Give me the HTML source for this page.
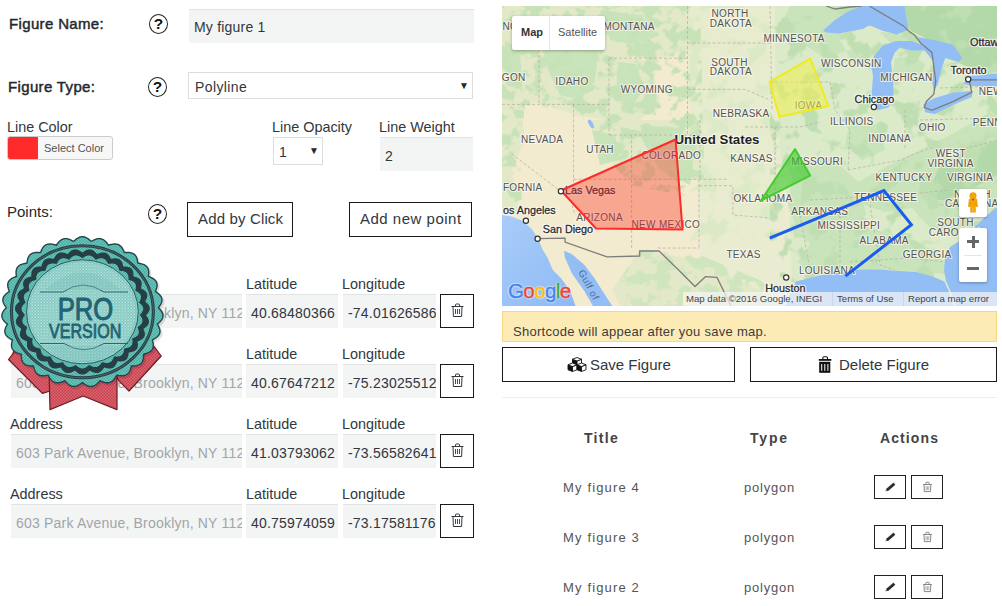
<!DOCTYPE html>
<html><head><meta charset="utf-8">
<style>
*{box-sizing:border-box;margin:0;padding:0}
html,body{width:1002px;height:606px;overflow:hidden;background:#fff;font-family:"Liberation Sans",sans-serif;color:#32373c}
.a{position:absolute;white-space:nowrap}
.lbl{font-size:14.4px;color:#32373c;line-height:1}
.b{font-weight:normal;font-size:15px;letter-spacing:0.35px;-webkit-text-stroke:0.45px #23282d;color:#23282d;line-height:1}
.q{position:absolute;width:19px;height:20px;border:1.3px solid #222;border-radius:50%;text-align:center;font-weight:bold;font-size:15.5px;line-height:18px;color:#111}
.inp{position:absolute;background:#f3f4f4;border-top:1px solid #e2e4e4;font-size:14px;color:#32373c;line-height:1}
.inp span{position:absolute;white-space:nowrap;letter-spacing:0.2px}
.btn{position:absolute;border:1.5px solid #1a1a1a;background:#fff;font-size:15px;color:#32373c;line-height:1}
.btn span{position:absolute;white-space:nowrap}
.tr{position:absolute;width:34px;height:34px;border:1.5px solid #1a1a1a;background:#fff}
</style></head><body>
<!-- LEFT PANEL -->
<div class="a b" style="left:9px;top:16px">Figure Name:</div>
<div class="q" style="left:149px;top:14px">?</div>
<div class="inp" style="left:189px;top:9px;width:285px;height:34px"><span style="left:5px;top:10px">My figure 1</span></div>

<div class="a b" style="left:8px;top:79px">Figure Type:</div>
<div class="q" style="left:148px;top:77px">?</div>
<div style="position:absolute;left:188px;top:72px;width:285px;height:27px;border:1px solid #ddd;background:#fff">
  <span class="a" style="left:6px;top:7px;font-size:14px;color:#32373c;line-height:1;letter-spacing:0.4px">Polyline</span>
  <span class="a" style="left:270px;top:8px;font-size:10px;color:#23282d;line-height:1">&#9660;</span>
</div>

<div class="a lbl" style="left:7px;top:120px">Line Color</div>
<div style="position:absolute;left:7px;top:136px;width:106px;height:24px;border:1px solid #ccc;border-radius:3px;background:#f7f7f7;overflow:hidden">
  <div style="position:absolute;left:0;top:0;width:30px;height:23px;background:#ff2a2a"></div>
  <span class="a" style="left:36px;top:6px;font-size:11px;color:#555;line-height:1">Select Color</span>
</div>

<div class="a lbl" style="left:272px;top:120px">Line Opacity</div>
<div style="position:absolute;left:273px;top:137px;width:50px;height:28px;border:1px solid #ddd;background:#fff">
  <span class="a" style="left:5px;top:7px;font-size:14px;line-height:1">1</span>
  <span class="a" style="left:35px;top:8px;font-size:10px;color:#23282d;line-height:1">&#9660;</span>
</div>
<div class="a lbl" style="left:379px;top:120px">Line Weight</div>
<div class="inp" style="left:380px;top:137px;width:93px;height:34px"><span style="left:5px;top:11px">2</span></div>

<div class="a" style="left:7px;top:204px;font-size:15px;color:#23282d;line-height:1">Points:</div>
<div class="q" style="left:148px;top:204px">?</div>
<div class="btn" style="left:187px;top:202px;width:106px;height:35px"><span style="left:10px;top:8px;letter-spacing:0.15px">Add by Click</span></div>
<div class="btn" style="left:349px;top:202px;width:123px;height:35px"><span style="left:10px;top:8px;letter-spacing:0.5px">Add new point</span></div>

<!-- rows -->
<div class="a lbl" style="left:10px;top:277px">Address</div>
<div class="inp" style="left:11px;top:294px;width:231px;height:34px;overflow:hidden"><span style="left:5px;top:11px;color:#a0a5aa">603 Park Avenue, Brooklyn, NY 11215</span></div>
<div class="a lbl" style="left:246px;top:277px">Latitude</div>
<div class="inp" style="left:246px;top:294px;width:92px;height:34px;overflow:hidden"><span style="left:5px;top:11px">40.68480366</span></div>
<div class="a lbl" style="left:342px;top:277px">Longitude</div>
<div class="inp" style="left:343px;top:294px;width:93px;height:34px;overflow:hidden"><span style="left:5px;top:11px">-74.01626586</span></div>
<div class="tr" style="left:440px;top:294px"><svg width="34" height="34" viewBox="0 0 34 34" style="position:absolute;left:-1.5px;top:-1.5px"><g fill="none" stroke="#32373c" stroke-width="1"><path d="M11.5 12.5h12M15.5 12.5v-1.5q0-1 1-1h2q1 0 1 1v1.5M13 12.5l0.4 10h8.2l0.4-10"/><path d="M15.5 15v5M17.5 15v5M19.5 15v5" stroke-width="0.9"/></g></svg></div>
<div class="a lbl" style="left:10px;top:347px">Address</div>
<div class="inp" style="left:11px;top:364px;width:231px;height:34px;overflow:hidden"><span style="left:5px;top:11px;color:#a0a5aa">603 Park Avenue, Brooklyn, NY 11215</span></div>
<div class="a lbl" style="left:246px;top:347px">Latitude</div>
<div class="inp" style="left:246px;top:364px;width:92px;height:34px;overflow:hidden"><span style="left:5px;top:11px">40.67647212</span></div>
<div class="a lbl" style="left:342px;top:347px">Longitude</div>
<div class="inp" style="left:343px;top:364px;width:93px;height:34px;overflow:hidden"><span style="left:5px;top:11px">-75.23025512</span></div>
<div class="tr" style="left:440px;top:364px"><svg width="34" height="34" viewBox="0 0 34 34" style="position:absolute;left:-1.5px;top:-1.5px"><g fill="none" stroke="#32373c" stroke-width="1"><path d="M11.5 12.5h12M15.5 12.5v-1.5q0-1 1-1h2q1 0 1 1v1.5M13 12.5l0.4 10h8.2l0.4-10"/><path d="M15.5 15v5M17.5 15v5M19.5 15v5" stroke-width="0.9"/></g></svg></div>
<div class="a lbl" style="left:10px;top:417px">Address</div>
<div class="inp" style="left:11px;top:434px;width:231px;height:34px;overflow:hidden"><span style="left:5px;top:11px;color:#a0a5aa">603 Park Avenue, Brooklyn, NY 11215</span></div>
<div class="a lbl" style="left:246px;top:417px">Latitude</div>
<div class="inp" style="left:246px;top:434px;width:92px;height:34px;overflow:hidden"><span style="left:5px;top:11px">41.03793062</span></div>
<div class="a lbl" style="left:342px;top:417px">Longitude</div>
<div class="inp" style="left:343px;top:434px;width:93px;height:34px;overflow:hidden"><span style="left:5px;top:11px">-73.56582641</span></div>
<div class="tr" style="left:440px;top:434px"><svg width="34" height="34" viewBox="0 0 34 34" style="position:absolute;left:-1.5px;top:-1.5px"><g fill="none" stroke="#32373c" stroke-width="1"><path d="M11.5 12.5h12M15.5 12.5v-1.5q0-1 1-1h2q1 0 1 1v1.5M13 12.5l0.4 10h8.2l0.4-10"/><path d="M15.5 15v5M17.5 15v5M19.5 15v5" stroke-width="0.9"/></g></svg></div>
<div class="a lbl" style="left:10px;top:487px">Address</div>
<div class="inp" style="left:11px;top:504px;width:231px;height:34px;overflow:hidden"><span style="left:5px;top:11px;color:#a0a5aa">603 Park Avenue, Brooklyn, NY 11215</span></div>
<div class="a lbl" style="left:246px;top:487px">Latitude</div>
<div class="inp" style="left:246px;top:504px;width:92px;height:34px;overflow:hidden"><span style="left:5px;top:11px">40.75974059</span></div>
<div class="a lbl" style="left:342px;top:487px">Longitude</div>
<div class="inp" style="left:343px;top:504px;width:93px;height:34px;overflow:hidden"><span style="left:5px;top:11px">-73.17581176</span></div>
<div class="tr" style="left:440px;top:504px"><svg width="34" height="34" viewBox="0 0 34 34" style="position:absolute;left:-1.5px;top:-1.5px"><g fill="none" stroke="#32373c" stroke-width="1"><path d="M11.5 12.5h12M15.5 12.5v-1.5q0-1 1-1h2q1 0 1 1v1.5M13 12.5l0.4 10h8.2l0.4-10"/><path d="M15.5 15v5M17.5 15v5M19.5 15v5" stroke-width="0.9"/></g></svg></div>


<svg width="170" height="190" viewBox="0 230 170 190" style="position:absolute;left:0;top:230px">
<defs>
<pattern id="ck1" width="3" height="3" patternUnits="userSpaceOnUse"><rect width="3" height="3" fill="#46ada2"/><rect width="1.5" height="1.5" fill="#72c6bc"/><rect x="1.5" y="1.5" width="1.5" height="1.5" fill="#72c6bc"/></pattern>
<pattern id="ck2" width="3" height="3" patternUnits="userSpaceOnUse"><rect width="3" height="3" fill="#82c8c0"/><rect width="1.5" height="1.5" fill="#9ed5ce"/><rect x="1.5" y="1.5" width="1.5" height="1.5" fill="#b6e2dd"/></pattern>
<pattern id="ck3" width="3" height="3" patternUnits="userSpaceOnUse"><rect width="3" height="3" fill="#c9414f"/><rect width="1.5" height="1.5" fill="#da6672"/><rect x="1.5" y="1.5" width="1.5" height="1.5" fill="#da6672"/></pattern>
</defs>
<polygon fill="url(#ck3)" stroke="#6e1c28" stroke-width="1.2" stroke-linejoin="round" points="8.5,359.5 16,350 50,376 50,391 42.4,393.4"/>
<polygon fill="url(#ck3)" stroke="#6e1c28" stroke-width="1.2" stroke-linejoin="round" points="154.4,346.8 161.2,356 129,391 118.8,380.7 116,376"/>
<polygon fill="url(#ck3)" stroke="#6e1c28" stroke-width="1.2" stroke-linejoin="round" points="49.2,376.5 117,376.5 117,409.6 83.1,396 50,409.6"/>
<path d="M82.40,235.77 L83.11,235.80 L83.82,235.89 L84.53,236.05 L85.24,236.27 L85.93,236.55 L86.62,236.88 L87.30,237.26 L87.97,237.68 L88.63,238.14 L89.28,238.64 L89.92,239.16 L90.55,239.71 L91.16,240.26 L91.85,240.18 L92.59,239.77 L93.34,239.38 L94.09,239.02 L94.85,238.68 L95.61,238.39 L96.36,238.13 L97.12,237.93 L97.87,237.77 L98.61,237.67 L99.35,237.63 L100.07,237.65 L100.78,237.73 L101.48,237.87 L102.16,238.08 L102.82,238.34 L103.47,238.67 L104.09,239.05 L104.69,239.48 L105.27,239.97 L105.83,240.50 L106.37,241.07 L106.90,241.67 L107.40,242.30 L107.88,242.95 L108.35,243.62 L108.81,244.30 L109.63,244.05 L110.45,243.82 L111.27,243.61 L112.10,243.43 L112.91,243.28 L113.72,243.17 L114.51,243.10 L115.29,243.07 L116.06,243.10 L116.80,243.18 L117.52,243.32 L118.21,243.51 L118.87,243.76 L119.50,244.07 L120.10,244.43 L120.67,244.85 L121.20,245.32 L121.70,245.84 L122.17,246.41 L122.61,247.02 L123.01,247.67 L123.39,248.35 L123.74,249.05 L124.06,249.78 L124.36,250.53 L124.65,251.28 L125.12,251.76 L125.98,251.70 L126.83,251.66 L127.68,251.64 L128.52,251.65 L129.35,251.69 L130.16,251.76 L130.94,251.88 L131.69,252.04 L132.42,252.25 L133.11,252.50 L133.76,252.80 L134.37,253.15 L134.94,253.56 L135.46,254.01 L135.94,254.50 L136.37,255.05 L136.76,255.64 L137.11,256.26 L137.41,256.93 L137.66,257.63 L137.89,258.35 L138.07,259.10 L138.22,259.87 L138.35,260.65 L138.46,261.44 L138.54,262.24 L139.13,262.59 L139.98,262.72 L140.82,262.87 L141.65,263.04 L142.46,263.23 L143.24,263.46 L144.00,263.72 L144.72,264.01 L145.40,264.34 L146.04,264.71 L146.63,265.12 L147.18,265.56 L147.67,266.05 L148.10,266.58 L148.48,267.14 L148.80,267.74 L149.07,268.37 L149.29,269.04 L149.45,269.73 L149.56,270.45 L149.62,271.19 L149.64,271.95 L149.62,272.72 L149.57,273.51 L149.49,274.30 L149.39,275.09 L149.27,275.88 L150.07,276.18 L150.86,276.50 L151.64,276.83 L152.39,277.18 L153.12,277.55 L153.82,277.95 L154.47,278.37 L155.09,278.82 L155.65,279.30 L156.17,279.80 L156.62,280.34 L157.02,280.90 L157.35,281.48 L157.63,282.10 L157.83,282.73 L157.98,283.39 L158.06,284.08 L158.09,284.77 L158.05,285.49 L157.96,286.22 L157.83,286.95 L157.64,287.70 L157.42,288.45 L157.17,289.20 L156.89,289.95 L156.59,290.70 L156.61,291.35 L157.31,291.82 L157.99,292.30 L158.66,292.79 L159.30,293.30 L159.90,293.82 L160.47,294.37 L160.99,294.92 L161.46,295.50 L161.87,296.09 L162.22,296.69 L162.51,297.31 L162.74,297.95 L162.89,298.60 L162.98,299.26 L163.01,299.92 L162.96,300.60 L162.85,301.28 L162.68,301.97 L162.45,302.66 L162.17,303.35 L161.84,304.03 L161.46,304.72 L161.05,305.40 L160.60,306.07 L160.14,306.74 L159.65,307.40 L159.87,308.02 L160.43,308.63 L160.97,309.25 L161.48,309.87 L161.97,310.51 L162.41,311.15 L162.81,311.80 L163.16,312.46 L163.46,313.12 L163.69,313.78 L163.86,314.45 L163.97,315.11 L164.01,315.78 L163.98,316.44 L163.88,317.10 L163.71,317.75 L163.48,318.40 L163.19,319.04 L162.83,319.66 L162.42,320.28 L161.96,320.89 L161.45,321.48 L160.90,322.06 L160.32,322.63 L159.71,323.19 L159.08,323.74 L158.45,324.27 L158.85,324.98 L159.24,325.69 L159.60,326.41 L159.94,327.13 L160.24,327.85 L160.50,328.57 L160.71,329.29 L160.87,330.00 L160.97,330.70 L161.02,331.40 L161.00,332.08 L160.92,332.74 L160.77,333.39 L160.55,334.03 L160.27,334.64 L159.92,335.23 L159.52,335.80 L159.05,336.35 L158.53,336.88 L157.96,337.38 L157.35,337.87 L156.69,338.33 L156.01,338.77 L155.29,339.20 L154.56,339.60 L153.81,340.00 L153.38,340.51 L153.59,341.28 L153.78,342.06 L153.95,342.84 L154.09,343.61 L154.19,344.37 L154.25,345.12 L154.26,345.86 L154.23,346.58 L154.13,347.28 L153.99,347.96 L153.78,348.61 L153.51,349.23 L153.18,349.82 L152.80,350.37 L152.35,350.90 L151.85,351.39 L151.30,351.85 L150.69,352.27 L150.04,352.66 L149.35,353.02 L148.62,353.35 L147.86,353.65 L147.07,353.92 L146.26,354.18 L145.44,354.41 L144.62,354.63 L144.35,355.23 L144.36,356.03 L144.35,356.82 L144.31,357.61 L144.24,358.39 L144.14,359.15 L144.00,359.88 L143.82,360.59 L143.58,361.28 L143.31,361.93 L142.98,362.54 L142.60,363.11 L142.17,363.65 L141.69,364.14 L141.16,364.58 L140.58,364.98 L139.95,365.34 L139.29,365.65 L138.58,365.92 L137.84,366.14 L137.06,366.33 L136.26,366.48 L135.44,366.60 L134.60,366.69 L133.75,366.75 L132.90,366.80 L132.04,366.83 L131.86,367.61 L131.66,368.39 L131.44,369.15 L131.20,369.91 L130.94,370.64 L130.64,371.35 L130.30,372.02 L129.94,372.66 L129.53,373.26 L129.08,373.82 L128.60,374.33 L128.07,374.79 L127.51,375.20 L126.91,375.56 L126.27,375.86 L125.60,376.11 L124.89,376.30 L124.15,376.44 L123.39,376.54 L122.61,376.58 L121.80,376.58 L120.98,376.55 L120.15,376.47 L119.31,376.37 L118.46,376.24 L117.62,376.10 L116.93,376.23 L116.56,376.95 L116.17,377.66 L115.76,378.36 L115.34,379.03 L114.89,379.68 L114.41,380.29 L113.91,380.86 L113.39,381.39 L112.83,381.87 L112.25,382.30 L111.65,382.67 L111.01,382.99 L110.36,383.25 L109.67,383.44 L108.97,383.58 L108.25,383.66 L107.51,383.68 L106.75,383.64 L105.98,383.55 L105.20,383.41 L104.42,383.22 L103.63,383.00 L102.83,382.74 L102.04,382.45 L101.25,382.14 L100.47,381.81 L99.85,382.11 L99.30,382.73 L98.75,383.33 L98.17,383.91 L97.58,384.47 L96.98,384.99 L96.36,385.47 L95.73,385.90 L95.08,386.29 L94.42,386.62 L93.74,386.89 L93.06,387.10 L92.36,387.25 L91.65,387.34 L90.94,387.37 L90.22,387.33 L89.49,387.23 L88.77,387.06 L88.04,386.85 L87.32,386.58 L86.59,386.26 L85.88,385.90 L85.17,385.49 L84.46,385.06 L83.77,384.60 L83.08,384.12 L82.40,383.63 L81.72,384.12 L81.03,384.60 L80.34,385.06 L79.63,385.49 L78.92,385.90 L78.21,386.26 L77.48,386.58 L76.76,386.85 L76.03,387.06 L75.31,387.23 L74.58,387.33 L73.86,387.37 L73.15,387.34 L72.44,387.25 L71.74,387.10 L71.06,386.89 L70.38,386.62 L69.72,386.29 L69.07,385.90 L68.44,385.47 L67.82,384.99 L67.22,384.47 L66.63,383.91 L66.05,383.33 L65.50,382.73 L64.95,382.11 L64.33,381.81 L63.55,382.14 L62.76,382.45 L61.97,382.74 L61.17,383.00 L60.38,383.22 L59.60,383.41 L58.82,383.55 L58.05,383.64 L57.29,383.68 L56.55,383.66 L55.83,383.58 L55.13,383.44 L54.44,383.25 L53.79,382.99 L53.15,382.67 L52.55,382.30 L51.97,381.87 L51.41,381.39 L50.89,380.86 L50.39,380.29 L49.91,379.68 L49.46,379.03 L49.04,378.36 L48.63,377.66 L48.24,376.95 L47.87,376.23 L47.18,376.10 L46.34,376.24 L45.49,376.37 L44.65,376.47 L43.82,376.55 L43.00,376.58 L42.19,376.58 L41.41,376.54 L40.65,376.44 L39.91,376.30 L39.20,376.11 L38.53,375.86 L37.89,375.56 L37.29,375.20 L36.73,374.79 L36.20,374.33 L35.72,373.82 L35.27,373.26 L34.86,372.66 L34.50,372.02 L34.16,371.35 L33.86,370.64 L33.60,369.91 L33.36,369.15 L33.14,368.39 L32.94,367.61 L32.76,366.83 L31.90,366.80 L31.05,366.75 L30.20,366.69 L29.36,366.60 L28.54,366.48 L27.74,366.33 L26.96,366.14 L26.22,365.92 L25.51,365.65 L24.85,365.34 L24.22,364.98 L23.64,364.58 L23.11,364.14 L22.63,363.65 L22.20,363.11 L21.82,362.54 L21.49,361.93 L21.22,361.28 L20.98,360.59 L20.80,359.88 L20.66,359.15 L20.56,358.39 L20.49,357.61 L20.45,356.82 L20.44,356.03 L20.45,355.23 L20.18,354.63 L19.36,354.41 L18.54,354.18 L17.73,353.92 L16.94,353.65 L16.18,353.35 L15.45,353.02 L14.76,352.66 L14.11,352.27 L13.50,351.85 L12.95,351.39 L12.45,350.90 L12.00,350.37 L11.62,349.82 L11.29,349.23 L11.02,348.61 L10.81,347.96 L10.67,347.28 L10.57,346.58 L10.54,345.86 L10.55,345.12 L10.61,344.37 L10.71,343.61 L10.85,342.84 L11.02,342.06 L11.21,341.28 L11.42,340.51 L10.99,340.00 L10.24,339.60 L9.51,339.20 L8.79,338.77 L8.11,338.33 L7.45,337.87 L6.84,337.38 L6.27,336.88 L5.75,336.35 L5.28,335.80 L4.88,335.23 L4.53,334.64 L4.25,334.03 L4.03,333.39 L3.88,332.74 L3.80,332.08 L3.78,331.40 L3.83,330.70 L3.93,330.00 L4.09,329.29 L4.30,328.57 L4.56,327.85 L4.86,327.13 L5.20,326.41 L5.56,325.69 L5.95,324.98 L6.35,324.27 L5.72,323.74 L5.09,323.19 L4.48,322.63 L3.90,322.06 L3.35,321.48 L2.84,320.89 L2.38,320.28 L1.97,319.66 L1.61,319.04 L1.32,318.40 L1.09,317.75 L0.92,317.10 L0.82,316.44 L0.79,315.78 L0.83,315.11 L0.94,314.45 L1.11,313.78 L1.34,313.12 L1.64,312.46 L1.99,311.80 L2.39,311.15 L2.83,310.51 L3.32,309.87 L3.83,309.25 L4.37,308.63 L4.93,308.02 L5.15,307.40 L4.66,306.74 L4.20,306.07 L3.75,305.40 L3.34,304.72 L2.96,304.03 L2.63,303.35 L2.35,302.66 L2.12,301.97 L1.95,301.28 L1.84,300.60 L1.79,299.92 L1.82,299.26 L1.91,298.60 L2.06,297.95 L2.29,297.31 L2.58,296.69 L2.93,296.09 L3.34,295.50 L3.81,294.92 L4.33,294.37 L4.90,293.82 L5.50,293.30 L6.14,292.79 L6.81,292.30 L7.49,291.82 L8.19,291.35 L8.21,290.70 L7.91,289.95 L7.63,289.20 L7.38,288.45 L7.16,287.70 L6.97,286.95 L6.84,286.22 L6.75,285.49 L6.71,284.77 L6.74,284.08 L6.82,283.39 L6.97,282.73 L7.17,282.10 L7.45,281.48 L7.78,280.90 L8.18,280.34 L8.63,279.80 L9.15,279.30 L9.71,278.82 L10.33,278.37 L10.98,277.95 L11.68,277.55 L12.41,277.18 L13.16,276.83 L13.94,276.50 L14.73,276.18 L15.53,275.88 L15.41,275.09 L15.31,274.30 L15.23,273.51 L15.18,272.72 L15.16,271.95 L15.18,271.19 L15.24,270.45 L15.35,269.73 L15.51,269.04 L15.73,268.37 L16.00,267.74 L16.32,267.14 L16.70,266.58 L17.13,266.05 L17.62,265.56 L18.17,265.12 L18.76,264.71 L19.40,264.34 L20.08,264.01 L20.80,263.72 L21.56,263.46 L22.34,263.23 L23.15,263.04 L23.98,262.87 L24.82,262.72 L25.67,262.59 L26.26,262.24 L26.34,261.44 L26.45,260.65 L26.58,259.87 L26.73,259.10 L26.91,258.35 L27.14,257.63 L27.39,256.93 L27.69,256.26 L28.04,255.64 L28.43,255.05 L28.86,254.50 L29.34,254.01 L29.86,253.56 L30.43,253.15 L31.04,252.80 L31.69,252.50 L32.38,252.25 L33.11,252.04 L33.86,251.88 L34.64,251.76 L35.45,251.69 L36.28,251.65 L37.12,251.64 L37.97,251.66 L38.82,251.70 L39.68,251.76 L40.15,251.28 L40.44,250.53 L40.74,249.78 L41.06,249.05 L41.41,248.35 L41.79,247.67 L42.19,247.02 L42.63,246.41 L43.10,245.84 L43.60,245.32 L44.13,244.85 L44.70,244.43 L45.30,244.07 L45.93,243.76 L46.59,243.51 L47.28,243.32 L48.00,243.18 L48.74,243.10 L49.51,243.07 L50.29,243.10 L51.08,243.17 L51.89,243.28 L52.70,243.43 L53.53,243.61 L54.35,243.82 L55.17,244.05 L55.99,244.30 L56.45,243.62 L56.92,242.95 L57.40,242.30 L57.90,241.67 L58.43,241.07 L58.97,240.50 L59.53,239.97 L60.11,239.48 L60.71,239.05 L61.33,238.67 L61.98,238.34 L62.64,238.08 L63.32,237.87 L64.02,237.73 L64.73,237.65 L65.45,237.63 L66.19,237.67 L66.93,237.77 L67.68,237.93 L68.44,238.13 L69.19,238.39 L69.95,238.68 L70.71,239.02 L71.46,239.38 L72.21,239.77 L72.95,240.18 L73.64,240.26 L74.25,239.71 L74.88,239.16 L75.52,238.64 L76.17,238.14 L76.83,237.68 L77.50,237.26 L78.18,236.88 L78.87,236.55 L79.56,236.27 L80.27,236.05 L80.98,235.89 L81.69,235.80Z" fill="rgba(0,0,0,0.12)" transform="translate(1.5,2)"/>
<path d="M82.40,236.77 L83.10,236.80 L83.81,236.89 L84.50,237.05 L85.20,237.27 L85.89,237.55 L86.56,237.87 L87.24,238.25 L87.90,238.68 L88.55,239.14 L89.19,239.64 L89.82,240.16 L90.43,240.70 L91.04,241.26 L91.72,241.17 L92.45,240.76 L93.19,240.37 L93.93,240.01 L94.68,239.67 L95.43,239.37 L96.18,239.12 L96.92,238.91 L97.66,238.75 L98.40,238.65 L99.12,238.61 L99.84,238.62 L100.54,238.70 L101.23,238.84 L101.90,239.05 L102.55,239.31 L103.19,239.63 L103.80,240.01 L104.40,240.44 L104.97,240.93 L105.52,241.45 L106.05,242.02 L106.56,242.62 L107.06,243.25 L107.53,243.90 L108.00,244.56 L108.44,245.24 L109.25,244.99 L110.07,244.76 L110.88,244.54 L111.69,244.36 L112.50,244.20 L113.30,244.09 L114.08,244.01 L114.86,243.99 L115.61,244.01 L116.34,244.09 L117.05,244.22 L117.73,244.41 L118.39,244.65 L119.01,244.96 L119.60,245.32 L120.16,245.73 L120.69,246.20 L121.18,246.72 L121.64,247.28 L122.07,247.88 L122.47,248.53 L122.83,249.20 L123.17,249.91 L123.49,250.63 L123.79,251.37 L124.06,252.12 L124.53,252.60 L125.37,252.53 L126.22,252.49 L127.07,252.46 L127.90,252.46 L128.72,252.50 L129.52,252.57 L130.29,252.68 L131.04,252.83 L131.76,253.03 L132.44,253.28 L133.08,253.58 L133.69,253.93 L134.25,254.32 L134.76,254.77 L135.24,255.26 L135.66,255.80 L136.04,256.38 L136.38,257.00 L136.67,257.66 L136.92,258.35 L137.14,259.07 L137.32,259.81 L137.46,260.58 L137.58,261.35 L137.68,262.14 L137.76,262.93 L138.35,263.27 L139.19,263.39 L140.02,263.54 L140.85,263.70 L141.65,263.89 L142.43,264.11 L143.18,264.36 L143.89,264.65 L144.57,264.97 L145.20,265.33 L145.79,265.73 L146.32,266.17 L146.81,266.65 L147.24,267.17 L147.61,267.73 L147.93,268.32 L148.19,268.95 L148.40,269.60 L148.56,270.29 L148.66,271.00 L148.72,271.74 L148.74,272.49 L148.71,273.25 L148.66,274.03 L148.57,274.81 L148.47,275.60 L148.34,276.38 L149.14,276.68 L149.92,276.98 L150.69,277.31 L151.44,277.65 L152.17,278.02 L152.86,278.40 L153.51,278.82 L154.12,279.26 L154.68,279.73 L155.19,280.22 L155.64,280.75 L156.04,281.30 L156.37,281.88 L156.64,282.49 L156.84,283.12 L156.98,283.77 L157.06,284.44 L157.08,285.13 L157.04,285.84 L156.95,286.56 L156.81,287.29 L156.63,288.02 L156.40,288.77 L156.15,289.51 L155.86,290.25 L155.56,290.99 L155.58,291.64 L156.27,292.09 L156.96,292.57 L157.62,293.05 L158.26,293.55 L158.86,294.07 L159.42,294.60 L159.94,295.15 L160.41,295.71 L160.82,296.29 L161.17,296.89 L161.46,297.51 L161.68,298.13 L161.84,298.77 L161.92,299.42 L161.94,300.08 L161.90,300.75 L161.79,301.42 L161.62,302.10 L161.39,302.78 L161.10,303.46 L160.77,304.14 L160.39,304.81 L159.98,305.49 L159.53,306.15 L159.06,306.81 L158.58,307.47 L158.79,308.08 L159.35,308.67 L159.89,309.28 L160.41,309.90 L160.89,310.53 L161.34,311.16 L161.74,311.80 L162.09,312.45 L162.38,313.10 L162.62,313.75 L162.79,314.41 L162.90,315.07 L162.94,315.73 L162.91,316.38 L162.81,317.03 L162.64,317.67 L162.41,318.31 L162.12,318.94 L161.76,319.56 L161.35,320.17 L160.89,320.76 L160.38,321.35 L159.83,321.92 L159.25,322.48 L158.65,323.03 L158.02,323.57 L157.39,324.10 L157.79,324.80 L158.18,325.50 L158.55,326.21 L158.89,326.92 L159.19,327.64 L159.45,328.35 L159.67,329.06 L159.83,329.76 L159.93,330.45 L159.98,331.14 L159.96,331.81 L159.88,332.47 L159.74,333.11 L159.52,333.73 L159.24,334.34 L158.90,334.92 L158.50,335.49 L158.04,336.03 L157.52,336.55 L156.95,337.04 L156.34,337.52 L155.69,337.97 L155.01,338.40 L154.29,338.82 L153.56,339.22 L152.82,339.61 L152.39,340.11 L152.61,340.88 L152.80,341.65 L152.98,342.41 L153.12,343.18 L153.22,343.93 L153.29,344.68 L153.31,345.41 L153.27,346.12 L153.18,346.81 L153.04,347.48 L152.84,348.12 L152.58,348.73 L152.25,349.32 L151.87,349.87 L151.43,350.39 L150.94,350.87 L150.39,351.32 L149.79,351.73 L149.14,352.12 L148.45,352.47 L147.73,352.79 L146.97,353.08 L146.19,353.35 L145.39,353.59 L144.57,353.82 L143.75,354.03 L143.50,354.63 L143.51,355.42 L143.50,356.21 L143.47,356.99 L143.41,357.76 L143.31,358.51 L143.18,359.24 L143.00,359.94 L142.77,360.62 L142.50,361.26 L142.18,361.87 L141.81,362.44 L141.38,362.96 L140.91,363.45 L140.38,363.89 L139.81,364.28 L139.19,364.63 L138.53,364.94 L137.83,365.20 L137.10,365.42 L136.33,365.60 L135.54,365.74 L134.72,365.86 L133.89,365.94 L133.05,366.00 L132.20,366.04 L131.35,366.06 L131.17,366.84 L130.98,367.61 L130.77,368.37 L130.54,369.12 L130.28,369.85 L129.99,370.55 L129.67,371.22 L129.30,371.85 L128.91,372.45 L128.47,373.00 L127.99,373.51 L127.47,373.96 L126.92,374.37 L126.32,374.72 L125.69,375.01 L125.03,375.26 L124.33,375.45 L123.60,375.59 L122.85,375.67 L122.07,375.72 L121.27,375.71 L120.46,375.67 L119.64,375.59 L118.80,375.49 L117.97,375.36 L117.13,375.21 L116.46,375.34 L116.09,376.05 L115.71,376.76 L115.31,377.45 L114.89,378.12 L114.45,378.76 L113.99,379.37 L113.49,379.94 L112.98,380.47 L112.43,380.94 L111.86,381.37 L111.26,381.74 L110.64,382.05 L109.99,382.31 L109.31,382.50 L108.62,382.64 L107.91,382.71 L107.17,382.73 L106.43,382.69 L105.67,382.59 L104.90,382.45 L104.12,382.26 L103.34,382.03 L102.56,381.77 L101.77,381.48 L100.99,381.17 L100.22,380.84 L99.61,381.14 L99.07,381.75 L98.52,382.35 L97.96,382.93 L97.38,383.49 L96.79,384.00 L96.18,384.48 L95.55,384.91 L94.91,385.30 L94.26,385.63 L93.60,385.90 L92.92,386.11 L92.23,386.26 L91.53,386.35 L90.83,386.37 L90.11,386.33 L89.40,386.23 L88.68,386.07 L87.97,385.85 L87.25,385.58 L86.54,385.26 L85.83,384.90 L85.13,384.50 L84.43,384.06 L83.75,383.60 L83.07,383.12 L82.40,382.63 L81.73,383.12 L81.05,383.60 L80.37,384.06 L79.67,384.50 L78.97,384.90 L78.26,385.26 L77.55,385.58 L76.83,385.85 L76.12,386.07 L75.40,386.23 L74.69,386.33 L73.97,386.37 L73.27,386.35 L72.57,386.26 L71.88,386.11 L71.20,385.90 L70.54,385.63 L69.89,385.30 L69.25,384.91 L68.62,384.48 L68.01,384.00 L67.42,383.49 L66.84,382.93 L66.28,382.35 L65.73,381.75 L65.19,381.14 L64.58,380.84 L63.81,381.17 L63.03,381.48 L62.24,381.77 L61.46,382.03 L60.68,382.26 L59.90,382.45 L59.13,382.59 L58.37,382.69 L57.63,382.73 L56.89,382.71 L56.18,382.64 L55.49,382.50 L54.81,382.31 L54.16,382.05 L53.54,381.74 L52.94,381.37 L52.37,380.94 L51.82,380.47 L51.31,379.94 L50.81,379.37 L50.35,378.76 L49.91,378.12 L49.49,377.45 L49.09,376.76 L48.71,376.05 L48.34,375.34 L47.67,375.21 L46.83,375.36 L46.00,375.49 L45.16,375.59 L44.34,375.67 L43.53,375.71 L42.73,375.72 L41.95,375.67 L41.20,375.59 L40.47,375.45 L39.77,375.26 L39.11,375.01 L38.48,374.72 L37.88,374.37 L37.33,373.96 L36.81,373.51 L36.33,373.00 L35.89,372.45 L35.50,371.85 L35.13,371.22 L34.81,370.55 L34.52,369.85 L34.26,369.12 L34.03,368.37 L33.82,367.61 L33.63,366.84 L33.45,366.06 L32.60,366.04 L31.75,366.00 L30.91,365.94 L30.08,365.86 L29.26,365.74 L28.47,365.60 L27.70,365.42 L26.97,365.20 L26.27,364.94 L25.61,364.63 L24.99,364.28 L24.42,363.89 L23.89,363.45 L23.42,362.96 L22.99,362.44 L22.62,361.87 L22.30,361.26 L22.03,360.62 L21.80,359.94 L21.62,359.24 L21.49,358.51 L21.39,357.76 L21.33,356.99 L21.30,356.21 L21.29,355.42 L21.30,354.63 L21.05,354.03 L20.23,353.82 L19.41,353.59 L18.61,353.35 L17.83,353.08 L17.07,352.79 L16.35,352.47 L15.66,352.12 L15.01,351.73 L14.41,351.32 L13.86,350.87 L13.37,350.39 L12.93,349.87 L12.55,349.32 L12.22,348.73 L11.96,348.12 L11.76,347.48 L11.62,346.81 L11.53,346.12 L11.49,345.41 L11.51,344.68 L11.58,343.93 L11.68,343.18 L11.82,342.41 L12.00,341.65 L12.19,340.88 L12.41,340.11 L11.98,339.61 L11.24,339.22 L10.51,338.82 L9.79,338.40 L9.11,337.97 L8.46,337.52 L7.85,337.04 L7.28,336.55 L6.76,336.03 L6.30,335.49 L5.90,334.92 L5.56,334.34 L5.28,333.73 L5.06,333.11 L4.92,332.47 L4.84,331.81 L4.82,331.14 L4.87,330.45 L4.97,329.76 L5.13,329.06 L5.35,328.35 L5.61,327.64 L5.91,326.92 L6.25,326.21 L6.62,325.50 L7.01,324.80 L7.41,324.10 L6.78,323.57 L6.15,323.03 L5.55,322.48 L4.97,321.92 L4.42,321.35 L3.91,320.76 L3.45,320.17 L3.04,319.56 L2.68,318.94 L2.39,318.31 L2.16,317.67 L1.99,317.03 L1.89,316.38 L1.86,315.73 L1.90,315.07 L2.01,314.41 L2.18,313.75 L2.42,313.10 L2.71,312.45 L3.06,311.80 L3.46,311.16 L3.91,310.53 L4.39,309.90 L4.91,309.28 L5.45,308.67 L6.01,308.08 L6.22,307.47 L5.74,306.81 L5.27,306.15 L4.82,305.49 L4.41,304.81 L4.03,304.14 L3.70,303.46 L3.41,302.78 L3.18,302.10 L3.01,301.42 L2.90,300.75 L2.86,300.08 L2.88,299.42 L2.96,298.77 L3.12,298.13 L3.34,297.51 L3.63,296.89 L3.98,296.29 L4.39,295.71 L4.86,295.15 L5.38,294.60 L5.94,294.07 L6.54,293.55 L7.18,293.05 L7.84,292.57 L8.53,292.09 L9.22,291.64 L9.24,290.99 L8.94,290.25 L8.65,289.51 L8.40,288.77 L8.17,288.02 L7.99,287.29 L7.85,286.56 L7.76,285.84 L7.72,285.13 L7.74,284.44 L7.82,283.77 L7.96,283.12 L8.16,282.49 L8.43,281.88 L8.76,281.30 L9.16,280.75 L9.61,280.22 L10.12,279.73 L10.68,279.26 L11.29,278.82 L11.94,278.40 L12.63,278.02 L13.36,277.65 L14.11,277.31 L14.88,276.98 L15.66,276.68 L16.46,276.38 L16.33,275.60 L16.23,274.81 L16.14,274.03 L16.09,273.25 L16.06,272.49 L16.08,271.74 L16.14,271.00 L16.24,270.29 L16.40,269.60 L16.61,268.95 L16.87,268.32 L17.19,267.73 L17.56,267.17 L17.99,266.65 L18.48,266.17 L19.01,265.73 L19.60,265.33 L20.23,264.97 L20.91,264.65 L21.62,264.36 L22.37,264.11 L23.15,263.89 L23.95,263.70 L24.78,263.54 L25.61,263.39 L26.45,263.27 L27.04,262.93 L27.12,262.14 L27.22,261.35 L27.34,260.58 L27.48,259.81 L27.66,259.07 L27.88,258.35 L28.13,257.66 L28.42,257.00 L28.76,256.38 L29.14,255.80 L29.56,255.26 L30.04,254.77 L30.55,254.32 L31.11,253.93 L31.72,253.58 L32.36,253.28 L33.04,253.03 L33.76,252.83 L34.51,252.68 L35.28,252.57 L36.08,252.50 L36.90,252.46 L37.73,252.46 L38.58,252.49 L39.43,252.53 L40.27,252.60 L40.74,252.12 L41.01,251.37 L41.31,250.63 L41.63,249.91 L41.97,249.20 L42.33,248.53 L42.73,247.88 L43.16,247.28 L43.62,246.72 L44.11,246.20 L44.64,245.73 L45.20,245.32 L45.79,244.96 L46.41,244.65 L47.07,244.41 L47.75,244.22 L48.46,244.09 L49.19,244.01 L49.94,243.99 L50.72,244.01 L51.50,244.09 L52.30,244.20 L53.11,244.36 L53.92,244.54 L54.73,244.76 L55.55,244.99 L56.36,245.24 L56.80,244.56 L57.27,243.90 L57.74,243.25 L58.24,242.62 L58.75,242.02 L59.28,241.45 L59.83,240.93 L60.40,240.44 L61.00,240.01 L61.61,239.63 L62.25,239.31 L62.90,239.05 L63.57,238.84 L64.26,238.70 L64.96,238.62 L65.68,238.61 L66.40,238.65 L67.14,238.75 L67.88,238.91 L68.62,239.12 L69.37,239.37 L70.12,239.67 L70.87,240.01 L71.61,240.37 L72.35,240.76 L73.08,241.17 L73.76,241.26 L74.37,240.70 L74.98,240.16 L75.61,239.64 L76.25,239.14 L76.90,238.68 L77.56,238.25 L78.24,237.87 L78.91,237.55 L79.60,237.27 L80.30,237.05 L80.99,236.89 L81.70,236.80Z" fill="url(#ck1)" stroke="#24464b" stroke-width="1.4"/>
<ellipse cx="82.4" cy="311.8" rx="70.95" ry="66.00" fill="none" stroke="#263f44" stroke-width="3"/>
<ellipse cx="82.4" cy="311.8" rx="70.95" ry="66.00" fill="none" stroke="#6f8d8f" stroke-width="0.5"/>
<path d="M82.40,252.59 L82.96,252.17 L83.53,251.75 L84.10,251.36 L84.68,250.99 L85.27,250.64 L85.86,250.33 L86.46,250.06 L87.06,249.82 L87.66,249.64 L88.26,249.50 L88.86,249.41 L89.45,249.37 L90.04,249.39 L90.63,249.47 L91.20,249.59 L91.77,249.77 L92.33,250.00 L92.87,250.28 L93.41,250.61 L93.93,250.98 L94.44,251.39 L94.93,251.83 L95.41,252.30 L95.88,252.79 L96.34,253.30 L96.79,253.83 L97.30,254.08 L97.95,253.80 L98.60,253.53 L99.26,253.27 L99.92,253.04 L100.57,252.85 L101.23,252.68 L101.87,252.56 L102.51,252.47 L103.14,252.43 L103.75,252.44 L104.35,252.50 L104.93,252.61 L105.49,252.77 L106.04,252.99 L106.56,253.25 L107.06,253.56 L107.54,253.92 L107.99,254.33 L108.42,254.77 L108.83,255.26 L109.22,255.77 L109.58,256.32 L109.93,256.89 L110.26,257.47 L110.57,258.07 L110.87,258.68 L111.44,258.79 L112.14,258.65 L112.85,258.53 L113.55,258.44 L114.24,258.37 L114.93,258.32 L115.60,258.31 L116.25,258.34 L116.88,258.41 L117.50,258.52 L118.08,258.68 L118.64,258.88 L119.17,259.13 L119.67,259.42 L120.13,259.76 L120.56,260.14 L120.96,260.57 L121.33,261.04 L121.66,261.54 L121.95,262.08 L122.22,262.64 L122.46,263.24 L122.67,263.85 L122.86,264.48 L123.03,265.13 L123.18,265.78 L123.32,266.44 L124.04,266.45 L124.75,266.48 L125.47,266.52 L126.17,266.58 L126.86,266.67 L127.53,266.78 L128.17,266.93 L128.79,267.11 L129.38,267.33 L129.94,267.58 L130.46,267.87 L130.94,268.20 L131.38,268.56 L131.78,268.97 L132.13,269.41 L132.44,269.89 L132.71,270.40 L132.93,270.94 L133.11,271.51 L133.26,272.10 L133.37,272.72 L133.44,273.35 L133.48,274.00 L133.50,274.66 L133.50,275.33 L133.48,275.99 L133.69,276.49 L134.39,276.66 L135.08,276.85 L135.76,277.05 L136.42,277.26 L137.06,277.50 L137.67,277.77 L138.25,278.06 L138.80,278.38 L139.31,278.72 L139.77,279.10 L140.19,279.50 L140.56,279.93 L140.88,280.39 L141.15,280.88 L141.37,281.40 L141.53,281.93 L141.65,282.49 L141.72,283.08 L141.74,283.67 L141.72,284.29 L141.66,284.91 L141.56,285.55 L141.43,286.19 L141.28,286.84 L141.10,287.49 L140.91,288.13 L141.27,288.55 L141.91,288.87 L142.53,289.20 L143.13,289.55 L143.71,289.91 L144.27,290.28 L144.79,290.68 L145.27,291.09 L145.71,291.52 L146.10,291.97 L146.44,292.44 L146.73,292.93 L146.96,293.44 L147.14,293.96 L147.26,294.50 L147.33,295.05 L147.34,295.61 L147.30,296.19 L147.20,296.77 L147.06,297.36 L146.87,297.95 L146.65,298.55 L146.38,299.15 L146.09,299.75 L145.77,300.34 L145.44,300.93 L145.09,301.52 L145.63,301.96 L146.16,302.41 L146.68,302.86 L147.18,303.33 L147.64,303.81 L148.08,304.30 L148.47,304.80 L148.82,305.31 L149.12,305.82 L149.37,306.35 L149.57,306.88 L149.71,307.42 L149.80,307.97 L149.82,308.51 L149.79,309.06 L149.69,309.61 L149.55,310.16 L149.34,310.71 L149.09,311.26 L148.79,311.80 L148.45,312.34 L148.07,312.87 L147.65,313.39 L147.21,313.91 L146.75,314.41 L146.27,314.91 L146.09,315.42 L146.50,315.97 L146.91,316.52 L147.29,317.08 L147.64,317.64 L147.97,318.21 L148.26,318.78 L148.50,319.35 L148.70,319.92 L148.85,320.49 L148.95,321.05 L148.99,321.61 L148.97,322.16 L148.90,322.71 L148.77,323.24 L148.58,323.77 L148.34,324.28 L148.04,324.78 L147.69,325.26 L147.29,325.74 L146.85,326.19 L146.37,326.64 L145.86,327.07 L145.32,327.48 L144.75,327.89 L144.17,328.28 L143.58,328.66 L143.56,329.20 L143.83,329.82 L144.08,330.44 L144.30,331.07 L144.50,331.69 L144.66,332.31 L144.79,332.92 L144.87,333.53 L144.91,334.12 L144.90,334.70 L144.83,335.26 L144.72,335.81 L144.55,336.34 L144.32,336.85 L144.04,337.33 L143.71,337.79 L143.33,338.23 L142.90,338.64 L142.43,339.03 L141.91,339.40 L141.36,339.74 L140.77,340.07 L140.16,340.37 L139.52,340.65 L138.86,340.91 L138.20,341.17 L137.53,341.41 L137.64,342.07 L137.74,342.73 L137.82,343.39 L137.87,344.04 L137.90,344.69 L137.89,345.32 L137.85,345.94 L137.77,346.54 L137.64,347.12 L137.47,347.67 L137.25,348.20 L136.99,348.70 L136.68,349.16 L136.32,349.60 L135.91,350.00 L135.46,350.36 L134.97,350.70 L134.43,351.00 L133.86,351.26 L133.26,351.50 L132.63,351.70 L131.97,351.88 L131.29,352.04 L130.59,352.17 L129.89,352.28 L129.18,352.38 L128.68,352.66 L128.63,353.32 L128.55,353.99 L128.46,354.64 L128.34,355.29 L128.20,355.92 L128.03,356.52 L127.82,357.11 L127.58,357.66 L127.30,358.19 L126.98,358.68 L126.63,359.13 L126.24,359.55 L125.80,359.92 L125.33,360.25 L124.83,360.54 L124.29,360.78 L123.71,360.99 L123.11,361.15 L122.48,361.28 L121.83,361.36 L121.15,361.42 L120.46,361.44 L119.76,361.43 L119.05,361.41 L118.33,361.36 L117.62,361.30 L117.23,361.70 L117.01,362.33 L116.77,362.96 L116.51,363.57 L116.23,364.17 L115.92,364.74 L115.60,365.29 L115.24,365.80 L114.86,366.27 L114.45,366.71 L114.01,367.11 L113.55,367.46 L113.05,367.76 L112.53,368.01 L111.98,368.22 L111.41,368.37 L110.81,368.48 L110.20,368.54 L109.56,368.56 L108.92,368.53 L108.25,368.46 L107.58,368.35 L106.90,368.22 L106.22,368.05 L105.54,367.87 L104.85,367.66 L104.17,367.44 L103.80,368.02 L103.42,368.58 L103.02,369.14 L102.61,369.67 L102.19,370.18 L101.75,370.66 L101.29,371.11 L100.81,371.52 L100.31,371.89 L99.80,372.21 L99.27,372.48 L98.72,372.71 L98.16,372.88 L97.59,372.99 L97.00,373.06 L96.40,373.07 L95.79,373.03 L95.18,372.94 L94.55,372.80 L93.93,372.62 L93.30,372.40 L92.67,372.14 L92.05,371.85 L91.43,371.54 L90.81,371.20 L90.19,370.85 L89.62,370.77 L89.12,371.25 L88.60,371.71 L88.08,372.16 L87.54,372.59 L87.00,372.98 L86.45,373.34 L85.89,373.67 L85.32,373.95 L84.74,374.18 L84.16,374.37 L83.58,374.50 L82.99,374.59 L82.40,374.61 L81.81,374.59 L81.22,374.50 L80.64,374.37 L80.06,374.18 L79.48,373.95 L78.91,373.67 L78.35,373.34 L77.80,372.98 L77.26,372.59 L76.72,372.16 L76.20,371.71 L75.68,371.25 L75.18,370.77 L74.61,370.85 L73.99,371.20 L73.37,371.54 L72.75,371.85 L72.13,372.14 L71.50,372.40 L70.87,372.62 L70.25,372.80 L69.62,372.94 L69.01,373.03 L68.40,373.07 L67.80,373.06 L67.21,372.99 L66.64,372.88 L66.08,372.71 L65.53,372.48 L65.00,372.21 L64.49,371.89 L63.99,371.52 L63.51,371.11 L63.05,370.66 L62.61,370.18 L62.19,369.67 L61.78,369.14 L61.38,368.58 L61.00,368.02 L60.63,367.44 L59.95,367.66 L59.26,367.87 L58.58,368.05 L57.90,368.22 L57.22,368.35 L56.55,368.46 L55.88,368.53 L55.24,368.56 L54.60,368.54 L53.99,368.48 L53.39,368.37 L52.82,368.22 L52.27,368.01 L51.75,367.76 L51.25,367.46 L50.79,367.11 L50.35,366.71 L49.94,366.27 L49.56,365.80 L49.20,365.29 L48.88,364.74 L48.57,364.17 L48.29,363.57 L48.03,362.96 L47.79,362.33 L47.57,361.70 L47.18,361.30 L46.47,361.36 L45.75,361.41 L45.04,361.43 L44.34,361.44 L43.65,361.42 L42.97,361.36 L42.32,361.28 L41.69,361.15 L41.09,360.99 L40.51,360.78 L39.97,360.54 L39.47,360.25 L39.00,359.92 L38.56,359.55 L38.17,359.13 L37.82,358.68 L37.50,358.19 L37.22,357.66 L36.98,357.11 L36.77,356.52 L36.60,355.92 L36.46,355.29 L36.34,354.64 L36.25,353.99 L36.17,353.32 L36.12,352.66 L35.62,352.38 L34.91,352.28 L34.21,352.17 L33.51,352.04 L32.83,351.88 L32.17,351.70 L31.54,351.50 L30.94,351.26 L30.37,351.00 L29.83,350.70 L29.34,350.36 L28.89,350.00 L28.48,349.60 L28.12,349.16 L27.81,348.70 L27.55,348.20 L27.33,347.67 L27.16,347.12 L27.03,346.54 L26.95,345.94 L26.91,345.32 L26.90,344.69 L26.93,344.04 L26.98,343.39 L27.06,342.73 L27.16,342.07 L27.27,341.41 L26.60,341.17 L25.94,340.91 L25.28,340.65 L24.64,340.37 L24.03,340.07 L23.44,339.74 L22.89,339.40 L22.37,339.03 L21.90,338.64 L21.47,338.23 L21.09,337.79 L20.76,337.33 L20.48,336.85 L20.25,336.34 L20.08,335.81 L19.97,335.26 L19.90,334.70 L19.89,334.12 L19.93,333.53 L20.01,332.92 L20.14,332.31 L20.30,331.69 L20.50,331.07 L20.72,330.44 L20.97,329.82 L21.24,329.20 L21.22,328.66 L20.63,328.28 L20.05,327.89 L19.48,327.48 L18.94,327.07 L18.43,326.64 L17.95,326.19 L17.51,325.74 L17.11,325.26 L16.76,324.78 L16.46,324.28 L16.22,323.77 L16.03,323.24 L15.90,322.71 L15.83,322.16 L15.81,321.61 L15.85,321.05 L15.95,320.49 L16.10,319.92 L16.30,319.35 L16.54,318.78 L16.83,318.21 L17.16,317.64 L17.51,317.08 L17.89,316.52 L18.30,315.97 L18.71,315.42 L18.53,314.91 L18.05,314.41 L17.59,313.91 L17.15,313.39 L16.73,312.87 L16.35,312.34 L16.01,311.80 L15.71,311.26 L15.46,310.71 L15.25,310.16 L15.11,309.61 L15.01,309.06 L14.98,308.51 L15.00,307.97 L15.09,307.42 L15.23,306.88 L15.43,306.35 L15.68,305.82 L15.98,305.31 L16.33,304.80 L16.72,304.30 L17.16,303.81 L17.62,303.33 L18.12,302.86 L18.64,302.41 L19.17,301.96 L19.71,301.52 L19.36,300.93 L19.03,300.34 L18.71,299.75 L18.42,299.15 L18.15,298.55 L17.93,297.95 L17.74,297.36 L17.60,296.77 L17.50,296.19 L17.46,295.61 L17.47,295.05 L17.54,294.50 L17.66,293.96 L17.84,293.44 L18.07,292.93 L18.36,292.44 L18.70,291.97 L19.09,291.52 L19.53,291.09 L20.01,290.68 L20.53,290.28 L21.09,289.91 L21.67,289.55 L22.27,289.20 L22.89,288.87 L23.53,288.55 L23.89,288.13 L23.70,287.49 L23.52,286.84 L23.37,286.19 L23.24,285.55 L23.14,284.91 L23.08,284.29 L23.06,283.67 L23.08,283.08 L23.15,282.49 L23.27,281.93 L23.43,281.40 L23.65,280.88 L23.92,280.39 L24.24,279.93 L24.61,279.50 L25.03,279.10 L25.49,278.72 L26.00,278.38 L26.55,278.06 L27.13,277.77 L27.74,277.50 L28.38,277.26 L29.04,277.05 L29.72,276.85 L30.41,276.66 L31.11,276.49 L31.32,275.99 L31.30,275.33 L31.30,274.66 L31.32,274.00 L31.36,273.35 L31.43,272.72 L31.54,272.10 L31.69,271.51 L31.87,270.94 L32.09,270.40 L32.36,269.89 L32.67,269.41 L33.02,268.97 L33.42,268.56 L33.86,268.20 L34.34,267.87 L34.86,267.58 L35.42,267.33 L36.01,267.11 L36.63,266.93 L37.27,266.78 L37.94,266.67 L38.63,266.58 L39.33,266.52 L40.05,266.48 L40.76,266.45 L41.48,266.44 L41.62,265.78 L41.77,265.13 L41.94,264.48 L42.13,263.85 L42.34,263.24 L42.58,262.64 L42.85,262.08 L43.14,261.54 L43.47,261.04 L43.84,260.57 L44.24,260.14 L44.67,259.76 L45.13,259.42 L45.63,259.13 L46.16,258.88 L46.72,258.68 L47.30,258.52 L47.92,258.41 L48.55,258.34 L49.20,258.31 L49.87,258.32 L50.56,258.37 L51.25,258.44 L51.95,258.53 L52.66,258.65 L53.36,258.79 L53.93,258.68 L54.23,258.07 L54.54,257.47 L54.87,256.89 L55.22,256.32 L55.58,255.77 L55.97,255.26 L56.38,254.77 L56.81,254.33 L57.26,253.92 L57.74,253.56 L58.24,253.25 L58.76,252.99 L59.31,252.77 L59.87,252.61 L60.45,252.50 L61.05,252.44 L61.66,252.43 L62.29,252.47 L62.93,252.56 L63.57,252.68 L64.23,252.85 L64.88,253.04 L65.54,253.27 L66.20,253.53 L66.85,253.80 L67.50,254.08 L68.01,253.83 L68.46,253.30 L68.92,252.79 L69.39,252.30 L69.87,251.83 L70.36,251.39 L70.87,250.98 L71.39,250.61 L71.93,250.28 L72.47,250.00 L73.03,249.77 L73.60,249.59 L74.17,249.47 L74.76,249.39 L75.35,249.37 L75.94,249.41 L76.54,249.50 L77.14,249.64 L77.74,249.82 L78.34,250.06 L78.94,250.33 L79.53,250.64 L80.12,250.99 L80.70,251.36 L81.27,251.75 L81.84,252.17Z" fill="#263f44"/>
<path d="M82.40,258.33 L82.91,257.96 L83.42,257.59 L83.94,257.24 L84.46,256.91 L84.99,256.61 L85.53,256.33 L86.06,256.09 L86.60,255.88 L87.15,255.71 L87.69,255.59 L88.23,255.51 L88.76,255.48 L89.30,255.50 L89.82,255.56 L90.34,255.68 L90.85,255.84 L91.36,256.05 L91.85,256.30 L92.33,256.59 L92.80,256.92 L93.26,257.28 L93.71,257.67 L94.15,258.09 L94.57,258.53 L94.99,258.99 L95.39,259.46 L95.85,259.69 L96.44,259.43 L97.03,259.19 L97.62,258.97 L98.21,258.77 L98.80,258.60 L99.39,258.45 L99.97,258.34 L100.54,258.27 L101.11,258.24 L101.66,258.25 L102.20,258.30 L102.73,258.40 L103.24,258.55 L103.73,258.74 L104.20,258.98 L104.65,259.26 L105.08,259.58 L105.49,259.94 L105.88,260.34 L106.25,260.77 L106.60,261.24 L106.93,261.72 L107.25,262.23 L107.55,262.76 L107.83,263.29 L108.11,263.84 L108.62,263.94 L109.25,263.82 L109.88,263.72 L110.51,263.63 L111.14,263.57 L111.75,263.54 L112.36,263.54 L112.94,263.57 L113.51,263.63 L114.06,263.73 L114.59,263.88 L115.10,264.06 L115.57,264.28 L116.02,264.55 L116.44,264.85 L116.83,265.20 L117.19,265.58 L117.52,266.00 L117.82,266.45 L118.09,266.93 L118.34,267.44 L118.55,267.97 L118.75,268.52 L118.92,269.09 L119.08,269.67 L119.22,270.25 L119.35,270.84 L119.99,270.86 L120.64,270.88 L121.28,270.93 L121.91,270.99 L122.52,271.07 L123.12,271.18 L123.70,271.31 L124.26,271.48 L124.79,271.67 L125.29,271.90 L125.76,272.17 L126.19,272.46 L126.59,272.79 L126.94,273.16 L127.26,273.56 L127.55,273.99 L127.79,274.45 L127.99,274.93 L128.16,275.44 L128.29,275.98 L128.39,276.53 L128.47,277.10 L128.51,277.68 L128.53,278.27 L128.53,278.87 L128.52,279.47 L128.71,279.92 L129.34,280.08 L129.95,280.25 L130.56,280.43 L131.15,280.63 L131.73,280.85 L132.28,281.09 L132.80,281.35 L133.29,281.64 L133.74,281.96 L134.16,282.29 L134.54,282.66 L134.87,283.05 L135.16,283.47 L135.40,283.91 L135.60,284.37 L135.75,284.85 L135.86,285.36 L135.92,285.88 L135.94,286.42 L135.93,286.97 L135.88,287.54 L135.80,288.11 L135.69,288.69 L135.55,289.27 L135.40,289.85 L135.23,290.43 L135.56,290.81 L136.12,291.10 L136.68,291.40 L137.22,291.71 L137.74,292.04 L138.23,292.38 L138.70,292.74 L139.13,293.11 L139.52,293.50 L139.87,293.91 L140.18,294.34 L140.44,294.78 L140.65,295.23 L140.81,295.71 L140.92,296.19 L140.98,296.69 L140.99,297.20 L140.95,297.71 L140.87,298.24 L140.75,298.77 L140.58,299.30 L140.38,299.84 L140.15,300.38 L139.89,300.92 L139.61,301.46 L139.31,301.99 L139.00,302.52 L139.49,302.91 L139.96,303.32 L140.42,303.73 L140.87,304.16 L141.28,304.59 L141.67,305.03 L142.02,305.48 L142.33,305.94 L142.60,306.41 L142.83,306.88 L143.00,307.36 L143.13,307.85 L143.20,308.34 L143.22,308.83 L143.19,309.33 L143.11,309.83 L142.98,310.32 L142.80,310.82 L142.58,311.31 L142.31,311.80 L142.01,312.28 L141.67,312.76 L141.30,313.23 L140.91,313.70 L140.49,314.16 L140.07,314.61 L139.91,315.07 L140.27,315.56 L140.63,316.06 L140.97,316.57 L141.29,317.07 L141.57,317.59 L141.83,318.10 L142.05,318.61 L142.22,319.13 L142.35,319.64 L142.44,320.15 L142.47,320.65 L142.46,321.15 L142.39,321.64 L142.27,322.12 L142.11,322.60 L141.89,323.06 L141.62,323.51 L141.31,323.95 L140.95,324.38 L140.56,324.79 L140.13,325.19 L139.67,325.58 L139.19,325.96 L138.69,326.32 L138.17,326.68 L137.64,327.02 L137.62,327.51 L137.86,328.07 L138.08,328.63 L138.27,329.19 L138.45,329.75 L138.59,330.31 L138.70,330.86 L138.77,331.40 L138.80,331.94 L138.79,332.46 L138.73,332.97 L138.62,333.46 L138.47,333.94 L138.26,334.40 L138.01,334.83 L137.72,335.25 L137.37,335.65 L136.99,336.02 L136.56,336.37 L136.10,336.71 L135.60,337.02 L135.08,337.31 L134.53,337.58 L133.96,337.84 L133.37,338.08 L132.78,338.31 L132.18,338.53 L132.27,339.13 L132.36,339.72 L132.42,340.32 L132.47,340.90 L132.49,341.48 L132.48,342.05 L132.44,342.61 L132.36,343.15 L132.24,343.67 L132.09,344.16 L131.89,344.64 L131.65,345.09 L131.37,345.51 L131.04,345.90 L130.68,346.26 L130.27,346.59 L129.83,346.89 L129.35,347.17 L128.84,347.41 L128.29,347.62 L127.73,347.81 L127.14,347.98 L126.53,348.12 L125.90,348.24 L125.27,348.34 L124.63,348.44 L124.19,348.69 L124.13,349.29 L124.06,349.89 L123.97,350.47 L123.87,351.05 L123.73,351.61 L123.57,352.16 L123.38,352.68 L123.16,353.18 L122.91,353.65 L122.62,354.09 L122.30,354.50 L121.95,354.87 L121.56,355.21 L121.13,355.51 L120.68,355.77 L120.19,355.99 L119.67,356.18 L119.13,356.33 L118.57,356.44 L117.98,356.53 L117.37,356.58 L116.75,356.60 L116.12,356.60 L115.48,356.58 L114.84,356.54 L114.20,356.49 L113.85,356.85 L113.64,357.42 L113.42,357.98 L113.18,358.53 L112.93,359.06 L112.65,359.58 L112.36,360.06 L112.03,360.52 L111.69,360.95 L111.32,361.34 L110.92,361.70 L110.50,362.01 L110.05,362.28 L109.58,362.51 L109.09,362.70 L108.57,362.84 L108.03,362.94 L107.48,362.99 L106.91,363.01 L106.33,362.99 L105.73,362.93 L105.13,362.84 L104.52,362.72 L103.90,362.58 L103.29,362.41 L102.67,362.23 L102.06,362.04 L101.72,362.56 L101.37,363.06 L101.02,363.56 L100.64,364.03 L100.26,364.49 L99.86,364.92 L99.44,365.32 L99.01,365.69 L98.56,366.01 L98.10,366.30 L97.62,366.55 L97.13,366.75 L96.62,366.90 L96.10,367.01 L95.57,367.06 L95.03,367.08 L94.48,367.04 L93.93,366.96 L93.37,366.84 L92.80,366.68 L92.24,366.49 L91.67,366.26 L91.11,366.01 L90.55,365.73 L89.99,365.43 L89.44,365.12 L88.92,365.05 L88.46,365.47 L88.00,365.89 L87.52,366.28 L87.04,366.66 L86.55,367.01 L86.05,367.34 L85.55,367.62 L85.03,367.88 L84.51,368.08 L83.99,368.25 L83.46,368.37 L82.93,368.44 L82.40,368.47 L81.87,368.44 L81.34,368.37 L80.81,368.25 L80.29,368.08 L79.77,367.88 L79.25,367.62 L78.75,367.34 L78.25,367.01 L77.76,366.66 L77.28,366.28 L76.80,365.89 L76.34,365.47 L75.88,365.05 L75.36,365.12 L74.81,365.43 L74.25,365.73 L73.69,366.01 L73.13,366.26 L72.56,366.49 L72.00,366.68 L71.43,366.84 L70.87,366.96 L70.32,367.04 L69.77,367.08 L69.23,367.06 L68.70,367.01 L68.18,366.90 L67.67,366.75 L67.18,366.55 L66.70,366.30 L66.24,366.01 L65.79,365.69 L65.36,365.32 L64.94,364.92 L64.54,364.49 L64.16,364.03 L63.78,363.56 L63.43,363.06 L63.08,362.56 L62.74,362.04 L62.13,362.23 L61.51,362.41 L60.90,362.58 L60.28,362.72 L59.67,362.84 L59.07,362.93 L58.47,362.99 L57.89,363.01 L57.32,362.99 L56.77,362.94 L56.23,362.84 L55.71,362.70 L55.22,362.51 L54.75,362.28 L54.30,362.01 L53.88,361.70 L53.48,361.34 L53.11,360.95 L52.77,360.52 L52.44,360.06 L52.15,359.58 L51.87,359.06 L51.62,358.53 L51.38,357.98 L51.16,357.42 L50.95,356.85 L50.60,356.49 L49.96,356.54 L49.32,356.58 L48.68,356.60 L48.05,356.60 L47.43,356.58 L46.82,356.53 L46.23,356.44 L45.67,356.33 L45.13,356.18 L44.61,355.99 L44.12,355.77 L43.67,355.51 L43.24,355.21 L42.85,354.87 L42.50,354.50 L42.18,354.09 L41.89,353.65 L41.64,353.18 L41.42,352.68 L41.23,352.16 L41.07,351.61 L40.93,351.05 L40.83,350.47 L40.74,349.89 L40.67,349.29 L40.61,348.69 L40.17,348.44 L39.53,348.34 L38.90,348.24 L38.27,348.12 L37.66,347.98 L37.07,347.81 L36.51,347.62 L35.96,347.41 L35.45,347.17 L34.97,346.89 L34.53,346.59 L34.12,346.26 L33.76,345.90 L33.43,345.51 L33.15,345.09 L32.91,344.64 L32.71,344.16 L32.56,343.67 L32.44,343.15 L32.36,342.61 L32.32,342.05 L32.31,341.48 L32.33,340.90 L32.38,340.32 L32.44,339.72 L32.53,339.13 L32.62,338.53 L32.02,338.31 L31.43,338.08 L30.84,337.84 L30.27,337.58 L29.72,337.31 L29.20,337.02 L28.70,336.71 L28.24,336.37 L27.81,336.02 L27.43,335.65 L27.08,335.25 L26.79,334.83 L26.54,334.40 L26.33,333.94 L26.18,333.46 L26.07,332.97 L26.01,332.46 L26.00,331.94 L26.03,331.40 L26.10,330.86 L26.21,330.31 L26.35,329.75 L26.53,329.19 L26.72,328.63 L26.94,328.07 L27.18,327.51 L27.16,327.02 L26.63,326.68 L26.11,326.32 L25.61,325.96 L25.13,325.58 L24.67,325.19 L24.24,324.79 L23.85,324.38 L23.49,323.95 L23.18,323.51 L22.91,323.06 L22.69,322.60 L22.53,322.12 L22.41,321.64 L22.34,321.15 L22.33,320.65 L22.36,320.15 L22.45,319.64 L22.58,319.13 L22.75,318.61 L22.97,318.10 L23.23,317.59 L23.51,317.07 L23.83,316.57 L24.17,316.06 L24.53,315.56 L24.89,315.07 L24.73,314.61 L24.31,314.16 L23.89,313.70 L23.50,313.23 L23.13,312.76 L22.79,312.28 L22.49,311.80 L22.22,311.31 L22.00,310.82 L21.82,310.32 L21.69,309.83 L21.61,309.33 L21.58,308.83 L21.60,308.34 L21.67,307.85 L21.80,307.36 L21.97,306.88 L22.20,306.41 L22.47,305.94 L22.78,305.48 L23.13,305.03 L23.52,304.59 L23.93,304.16 L24.38,303.73 L24.84,303.32 L25.31,302.91 L25.80,302.52 L25.49,301.99 L25.19,301.46 L24.91,300.92 L24.65,300.38 L24.42,299.84 L24.22,299.30 L24.05,298.77 L23.93,298.24 L23.85,297.71 L23.81,297.20 L23.82,296.69 L23.88,296.19 L23.99,295.71 L24.15,295.23 L24.36,294.78 L24.62,294.34 L24.93,293.91 L25.28,293.50 L25.67,293.11 L26.10,292.74 L26.57,292.38 L27.06,292.04 L27.58,291.71 L28.12,291.40 L28.68,291.10 L29.24,290.81 L29.57,290.43 L29.40,289.85 L29.25,289.27 L29.11,288.69 L29.00,288.11 L28.92,287.54 L28.87,286.97 L28.86,286.42 L28.88,285.88 L28.94,285.36 L29.05,284.85 L29.20,284.37 L29.40,283.91 L29.64,283.47 L29.93,283.05 L30.26,282.66 L30.64,282.29 L31.06,281.96 L31.51,281.64 L32.00,281.35 L32.52,281.09 L33.07,280.85 L33.65,280.63 L34.24,280.43 L34.85,280.25 L35.46,280.08 L36.09,279.92 L36.28,279.47 L36.27,278.87 L36.27,278.27 L36.29,277.68 L36.33,277.10 L36.41,276.53 L36.51,275.98 L36.64,275.44 L36.81,274.93 L37.01,274.45 L37.25,273.99 L37.54,273.56 L37.86,273.16 L38.21,272.79 L38.61,272.46 L39.04,272.17 L39.51,271.90 L40.01,271.67 L40.54,271.48 L41.10,271.31 L41.68,271.18 L42.28,271.07 L42.89,270.99 L43.52,270.93 L44.16,270.88 L44.81,270.86 L45.45,270.84 L45.58,270.25 L45.72,269.67 L45.88,269.09 L46.05,268.52 L46.25,267.97 L46.46,267.44 L46.71,266.93 L46.98,266.45 L47.28,266.00 L47.61,265.58 L47.97,265.20 L48.36,264.85 L48.78,264.55 L49.23,264.28 L49.70,264.06 L50.21,263.88 L50.74,263.73 L51.29,263.63 L51.86,263.57 L52.44,263.54 L53.05,263.54 L53.66,263.57 L54.29,263.63 L54.92,263.72 L55.55,263.82 L56.18,263.94 L56.69,263.84 L56.97,263.29 L57.25,262.76 L57.55,262.23 L57.87,261.72 L58.20,261.24 L58.55,260.77 L58.92,260.34 L59.31,259.94 L59.72,259.58 L60.15,259.26 L60.60,258.98 L61.07,258.74 L61.56,258.55 L62.07,258.40 L62.60,258.30 L63.14,258.25 L63.69,258.24 L64.26,258.27 L64.83,258.34 L65.41,258.45 L66.00,258.60 L66.59,258.77 L67.18,258.97 L67.77,259.19 L68.36,259.43 L68.95,259.69 L69.41,259.46 L69.81,258.99 L70.23,258.53 L70.65,258.09 L71.09,257.67 L71.54,257.28 L72.00,256.92 L72.47,256.59 L72.95,256.30 L73.44,256.05 L73.95,255.84 L74.46,255.68 L74.98,255.56 L75.50,255.50 L76.04,255.48 L76.57,255.51 L77.11,255.59 L77.65,255.71 L78.20,255.88 L78.74,256.09 L79.27,256.33 L79.81,256.61 L80.34,256.91 L80.86,257.24 L81.38,257.59 L81.89,257.96Z" fill="url(#ck1)"/>
<ellipse cx="82.4" cy="311.8" rx="55.90" ry="52.00" fill="url(#ck2)" stroke="#2c5a60" stroke-width="1"/>
<ellipse cx="82.4" cy="311.8" rx="53.75" ry="50.00" fill="none" stroke="#7cc4bc" stroke-width="0.8"/>
<path d="M40,292 L63,292 Q83,278 104,292 L128,292" fill="none" stroke="#2b6770" stroke-width="1"/>
<path d="M40,343.5 L64,343.5 Q84,356 104,343.5 L128,343.5" fill="none" stroke="#2b6770" stroke-width="1"/>
<path d="M45,290 Q83,255 121,290 Z" fill="rgba(120,190,185,0.35)"/>
<path d="M45,346 Q83,378 121,346 Z" fill="rgba(120,190,185,0.35)"/>
<text x="57.7" y="320.4" font-family="Liberation Sans" font-size="31" fill="#1f6473" stroke="#1f6473" stroke-width="1" textLength="55.5" lengthAdjust="spacingAndGlyphs">PRO</text>
<text x="49" y="338.3" font-family="Liberation Sans" font-size="19.5" fill="#1f6473" stroke="#1f6473" stroke-width="0.8" textLength="72.3" lengthAdjust="spacingAndGlyphs">VERSION</text>
</svg>
<!-- RIGHT PANEL -->
<div id="map" style="position:absolute;left:502px;top:6px;width:495px;height:300px;background:#f2ecd0;overflow:hidden">
<svg width="495" height="300" viewBox="502 6 495 300" style="position:absolute;left:0;top:0">
<defs><linearGradient id="oc" x1="0" y1="0" x2="1" y2="1"><stop offset="0" stop-color="#a9cdf9"/><stop offset="1" stop-color="#8db9f5"/></linearGradient><filter id="mot" filterUnits="userSpaceOnUse" x="502" y="6" width="495" height="300"><feTurbulence type="fractalNoise" baseFrequency="0.07" numOctaves="3" seed="11" result="n"/><feColorMatrix in="n" type="matrix" values="0 0 0 0 0  0 0 0 0 0  0 0 0 0 0  9 0 0 0 -4.3" result="m"/><feComposite in="SourceGraphic" in2="m" operator="in"/></filter><filter id="mot2" filterUnits="userSpaceOnUse" x="502" y="6" width="495" height="300"><feTurbulence type="fractalNoise" baseFrequency="0.05" numOctaves="3" seed="5" result="n"/><feColorMatrix in="n" type="matrix" values="0 0 0 0 0  0 0 0 0 0  0 0 0 0 0  9 0 0 0 -4.9" result="m"/><feComposite in="SourceGraphic" in2="m" operator="in"/></filter></defs>
<rect x="502" y="6" width="495" height="300" fill="#f3ebcf"/>
<polygon fill="#e7ecce" points="688.0,6.0 775.0,6.0 790.0,306.0 700.0,306.0 730.0,280.0 740.0,250.0 700.0,230.0 695.0,150.0 688.0,90.0"/>
<polygon fill="#dbeac8" points="775.0,6.0 997.0,6.0 997.0,306.0 786.0,306.0 790.0,280.0 790.0,220.0 780.0,150.0 775.0,60.0"/>
<polygon fill="#e9ecd0" points="699.0,186.0 733.0,186.0 733.0,215.0 790.0,220.0 792.0,280.0 786.0,306.0 731.0,306.0 705.0,277.0 699.0,248.0"/>
<polygon fill="#e3e9c8" points="502.0,6.0 690.0,6.0 690.0,50.0 660.0,58.0 610.0,58.0 607.0,120.0 575.0,115.0 545.0,105.0 520.0,100.0 502.0,95.0"/>
<polygon fill="#e3e9c8" points="502.0,95.0 520.0,100.0 525.0,140.0 512.0,170.0 520.0,214.0 502.0,214.0"/>
<polygon fill="#e3e9c8" points="607.0,58.0 650.0,60.0 660.0,100.0 640.0,120.0 607.0,120.0"/>
<polygon fill="#e3e9c8" points="590.0,120.0 700.0,120.0 702.0,180.0 631.0,180.0 600.0,150.0"/>
<polygon fill="#e3e9c8" points="640.0,250.0 700.0,260.0 760.0,290.0 770.0,306.0 620.0,306.0 612.0,290.0"/>
<polygon fill="#c9e4bb" points="540.0,40.0 560.0,30.0 600.0,40.0 595.0,80.0 580.0,100.0 560.0,95.0 548.0,70.0"/>
<polygon fill="#c9e4bb" points="600.0,10.0 640.0,15.0 660.0,35.0 635.0,45.0 610.0,40.0"/>
<polygon fill="#c9e4bb" points="505.0,40.0 520.0,50.0 522.0,90.0 506.0,85.0"/>
<polygon fill="#c9e4bb" points="618.0,62.0 636.0,64.0 644.0,88.0 630.0,110.0 616.0,95.0"/>
<polygon fill="#c9e4bb" points="640.0,125.0 680.0,128.0 695.0,150.0 690.0,185.0 660.0,170.0 645.0,145.0"/>
<polygon fill="#c9e4bb" points="592.0,130.0 615.0,135.0 620.0,160.0 600.0,165.0"/>
<polygon fill="#b3d9ab" points="840.0,6.0 997.0,6.0 997.0,72.0 965.0,66.0 950.0,58.0 925.0,38.0 905.0,28.0 870.0,26.0 845.0,30.0"/>
<polygon fill="#c9e4bb" points="790.0,6.0 840.0,6.0 860.0,28.0 840.0,40.0 852.0,62.0 875.0,72.0 865.0,45.0 825.0,58.0 800.0,42.0 780.0,28.0"/>
<polygon fill="#c9e4bb" points="880.0,32.0 918.0,36.0 928.0,48.0 910.0,52.0 895.0,48.0"/>
<polygon fill="#c9e4bb" points="895.0,58.0 915.0,56.0 925.0,64.0 920.0,80.0 905.0,82.0 893.0,72.0"/>
<polygon fill="#c9e4bb" points="920.0,150.0 950.0,135.0 980.0,118.0 997.0,110.0 997.0,200.0 978.0,214.0 955.0,238.0 930.0,228.0 912.0,208.0 885.0,212.0 862.0,204.0 852.0,185.0 880.0,170.0"/>
<polygon fill="#b3d9ab" points="940.0,165.0 970.0,150.0 997.0,140.0 997.0,175.0 970.0,190.0 945.0,200.0 925.0,200.0"/>
<polygon fill="#c9e4bb" points="795.0,160.0 832.0,158.0 858.0,182.0 866.0,214.0 852.0,240.0 822.0,252.0 800.0,236.0 788.0,205.0"/>
<polygon fill="#c9e4bb" points="812.0,242.0 870.0,228.0 918.0,242.0 942.0,256.0 948.0,274.0 918.0,272.0 880.0,270.0 842.0,273.0 812.0,278.0 798.0,262.0"/>
<polygon fill="#c9e4bb" points="850.0,120.0 880.0,125.0 885.0,150.0 862.0,160.0 845.0,145.0"/>
<g filter="url(#mot)"><polygon fill="#c6e2b6" points="502.0,6.0 700.0,6.0 705.0,200.0 631.0,185.0 600.0,150.0 580.0,112.0 530.0,106.0 502.0,100.0"/><polygon fill="#c6e2b6" points="502.0,100.0 525.0,105.0 520.0,150.0 522.0,214.0 502.0,214.0"/><polygon fill="#cfe5bd" points="640.0,250.0 700.0,255.0 760.0,280.0 786.0,306.0 625.0,306.0 612.0,290.0"/></g>
<g filter="url(#mot2)"><rect x="770" y="6" width="227" height="300" fill="#bfdeb1"/><rect x="690" y="6" width="80" height="240" fill="#dce9c6"/></g>
<polygon fill="url(#oc)" points="502.0,214.9 511.6,216.6 523.0,221.0 531.8,228.9 537.9,238.5 542.3,249.0 547.5,257.8 552.8,270.0 561.5,278.8 570.2,291.0 575.5,306.0 502.0,306.0"/>
<polygon fill="#93bdf5" points="564.0,250.8 572.0,254.3 584.3,264.8 594.8,278.8 607.0,298.0 612.3,306.0 593.0,306.0 584.3,291.0 572.0,273.5 565.0,257.8"/>
<polygon fill="#93bdf5" points="786.0,306.0 791.0,292.2 796.0,281.4 820.0,275.4 843.8,271.9 860.6,269.5 879.8,269.5 894.0,270.7 915.7,271.9 932.5,276.6 944.4,281.4 949.2,292.0 954.0,306.0"/>
<polygon fill="#93bdf5" points="997.0,207.0 985.0,217.0 977.0,225.0 968.0,233.0 961.0,240.0 950.0,247.0 945.0,258.0 944.0,270.0 946.0,281.0 951.0,292.0 956.0,306.0 997.0,306.0"/>
<polygon fill="#93bdf5" points="822.8,30.7 835.0,20.0 848.0,11.5 862.0,6.0 904.5,6.0 908.3,29.7 896.9,34.5 882.6,30.7 869.3,25.0 863.6,28.8 848.5,31.5 839.0,33.5 826.6,32.6"/>
<polygon fill="#93bdf5" points="874.0,56.2 882.6,45.8 895.9,41.0 911.0,41.0 922.4,44.8 923.4,50.5 911.0,50.5 899.7,47.5 894.5,53.0 891.0,62.0 893.0,80.9 893.5,94.2 888.5,107.4 877.5,110.3 871.5,96.0 873.0,77.1 871.5,65.7"/>
<polygon fill="#93bdf5" points="918.6,37.2 933.8,40.1 952.8,44.8 962.3,58.1 958.5,61.9 945.2,58.1 941.4,69.5 937.6,84.7 933.8,90.4 931.9,80.9 933.8,61.9 926.2,52.4 920.5,46.7"/>
<polygon fill="#93bdf5" points="923.3,104.5 933.8,98.3 952.8,92.7 972.7,90.8 971.8,97.0 953.8,104.6 934.8,114.1 925.2,112.2"/>
<polygon fill="#93bdf5" points="963.2,83.8 970.7,76.1 997.0,73.5 997.0,86.0 971.7,86.0"/>
<ellipse cx="591" cy="124" rx="2" ry="5" fill="#93bdf5" transform="rotate(-30 591 124)"/>
<polyline stroke="#b8b4a8" stroke-width="0.8" stroke-dasharray="3 2" fill="none" points="687.5,6.0 687.5,135.0"/>
<polyline stroke="#b8b4a8" stroke-width="0.8" stroke-dasharray="3 2" fill="none" points="687.5,43.0 770.0,43.0"/>
<polyline stroke="#b8b4a8" stroke-width="0.8" stroke-dasharray="3 2" fill="none" points="770.0,6.0 772.0,110.0"/>
<polyline stroke="#b8b4a8" stroke-width="0.8" stroke-dasharray="3 2" fill="none" points="687.5,89.4 745.0,89.4 770.0,100.0"/>
<polyline stroke="#b8b4a8" stroke-width="0.8" stroke-dasharray="3 2" fill="none" points="609.0,58.2 687.5,58.2"/>
<polyline stroke="#b8b4a8" stroke-width="0.8" stroke-dasharray="3 2" fill="none" points="609.0,58.2 609.0,135.0"/>
<polyline stroke="#b8b4a8" stroke-width="0.8" stroke-dasharray="3 2" fill="none" points="539.0,50.0 539.0,104.4"/>
<polyline stroke="#b8b4a8" stroke-width="0.8" stroke-dasharray="3 2" fill="none" points="502.0,104.4 609.0,104.4"/>
<polyline stroke="#b8b4a8" stroke-width="0.8" stroke-dasharray="3 2" fill="none" points="573.5,104.4 573.5,195.0"/>
<polyline stroke="#b8b4a8" stroke-width="0.8" stroke-dasharray="3 2" fill="none" points="609.0,135.0 700.0,135.0"/>
<polyline stroke="#b8b4a8" stroke-width="0.8" stroke-dasharray="3 2" fill="none" points="700.0,120.0 700.0,179.0"/>
<polyline stroke="#b8b4a8" stroke-width="0.8" stroke-dasharray="3 2" fill="none" points="631.6,135.0 631.6,249.0"/>
<polyline stroke="#b8b4a8" stroke-width="0.8" stroke-dasharray="3 2" fill="none" points="573.5,179.3 727.0,179.3"/>
<polyline stroke="#b8b4a8" stroke-width="0.8" stroke-dasharray="3 2" fill="none" points="699.0,179.3 699.0,248.0"/>
<polyline stroke="#b8b4a8" stroke-width="0.8" stroke-dasharray="3 2" fill="none" points="657.7,248.0 699.0,248.0"/>
<polyline stroke="#b8b4a8" stroke-width="0.8" stroke-dasharray="3 2" fill="none" points="699.0,185.7 732.9,185.7 732.9,215.0 770.0,218.0"/>
<polyline stroke="#b8b4a8" stroke-width="0.8" stroke-dasharray="3 2" fill="none" points="511.8,154.0 559.5,190.5 570.7,200.3 575.0,215.0"/>
<polyline stroke="#b8b4a8" stroke-width="0.8" stroke-dasharray="3 2" fill="none" points="770.0,82.0 830.0,82.0"/>
<polyline stroke="#b8b4a8" stroke-width="0.8" stroke-dasharray="3 2" fill="none" points="745.0,127.0 800.0,127.0 820.0,122.0"/>
<polyline stroke="#b8b4a8" stroke-width="0.8" stroke-dasharray="3 2" fill="none" points="775.0,127.0 775.0,200.0"/>
<polyline stroke="#b8b4a8" stroke-width="0.8" stroke-dasharray="3 2" fill="none" points="830.0,82.0 835.0,110.0 850.0,130.0 848.0,170.0"/>
<polyline stroke="#b8b4a8" stroke-width="0.8" stroke-dasharray="3 2" fill="none" points="848.0,170.0 900.0,160.0 930.0,148.0 960.0,150.0"/>
<polyline stroke="#b8b4a8" stroke-width="0.8" stroke-dasharray="3 2" fill="none" points="810.0,200.0 900.0,195.0 950.0,190.0"/>
<polyline stroke="#b8b4a8" stroke-width="0.8" stroke-dasharray="3 2" fill="none" points="800.0,215.0 810.0,270.0"/>
<polyline stroke="#b8b4a8" stroke-width="0.8" stroke-dasharray="3 2" fill="none" points="840.0,210.0 840.0,275.0"/>
<polyline stroke="#b8b4a8" stroke-width="0.8" stroke-dasharray="3 2" fill="none" points="870.0,205.0 880.0,265.0 895.0,270.0"/>
<polyline stroke="#b8b4a8" stroke-width="0.8" stroke-dasharray="3 2" fill="none" points="850.0,262.0 910.0,258.0 945.0,262.0"/>
<polyline stroke="#b8b4a8" stroke-width="0.8" stroke-dasharray="3 2" fill="none" points="905.0,110.0 905.0,150.0"/>
<polyline stroke="#b8b4a8" stroke-width="0.8" stroke-dasharray="3 2" fill="none" points="920.0,120.0 997.0,118.0"/>
<polyline stroke="#b8b4a8" stroke-width="0.8" stroke-dasharray="3 2" fill="none" points="940.0,88.0 997.0,86.0"/>
<polyline stroke="#b8b4a8" stroke-width="0.8" stroke-dasharray="3 2" fill="none" points="960.0,150.0 997.0,140.0"/>
<polyline stroke="#b8b4a8" stroke-width="0.8" stroke-dasharray="3 2" fill="none" points="940.0,205.0 980.0,200.0"/>
<polyline stroke="#7d7d7d" stroke-width="1.3" fill="none" points="537.6,238.7 565.0,238.2 565.0,242.0 607.0,256.9 639.7,256.0 639.7,251.0 659.0,251.0 679.6,271.0 695.0,286.5 705.4,276.7 717.0,277.4 731.0,306.0"/>
<polyline stroke="#7d7d7d" stroke-width="1.3" fill="none" points="869.3,6.0 903.5,25.9 909.2,31.6 914.8,35.3 920.5,42.9 931.9,52.4 935.7,80.9 933.8,94.2 926.2,101.7 924.3,107.4 931.9,110.3 952.8,101.7 971.7,92.3 969.8,82.8 968.0,79.9 997.0,79.9"/>
<polyline stroke="#7d7d7d" stroke-width="1.3" fill="none" points="826.0,6.0 835.0,9.0 850.0,7.0 862.0,6.0"/>
<g font-family="Liberation Sans" font-size="10" letter-spacing="0.3" fill="none" stroke="#fbf8ee" stroke-width="2.2" stroke-opacity="0.75" stroke-linejoin="round">
<text x="711.6" y="17.3">NORTH</text>
<text x="709.7" y="27.4">DAKOTA</text>
<text x="763.4" y="42.4">MINNESOTA</text>
<text x="711.2" y="65.7">SOUTH</text>
<text x="709.7" y="75.2">DAKOTA</text>
<text x="712.7" y="116.5">NEBRASKA</text>
<text x="794.7" y="109.3">IOWA</text>
<text x="603.4" y="30.4">MONTANA</text>
<text x="555.3" y="85.4">IDAHO</text>
<text x="620.7" y="93.4">WYOMING</text>
<text x="501.8" y="81.2">GON</text>
<text x="502.5" y="29.5">NG</text>
<text x="521" y="142.5">NEVADA</text>
<text x="586.2" y="152.6">UTAH</text>
<text x="641.4" y="159">COLORADO</text>
<text x="730.3" y="161.6">KANSAS</text>
<text x="502.9" y="190.5">FORNIA</text>
<text x="576.3" y="220.8">ARIZONA</text>
<text x="631.6" y="228.4">NEW MEXICO</text>
<text x="733.4" y="201.7">OKLAHOMA</text>
<text x="726.4" y="258.4">TEXAS</text>
<text x="821" y="66.6">WISCONSIN</text>
<text x="880.2" y="81.4">MICHIGAN</text>
<text x="830" y="124.7">ILLINOIS</text>
<text x="918.8" y="130.7">OHIO</text>
<text x="868.3" y="141.8">INDIANA</text>
<text x="978.8" y="95.1">NEW</text>
<text x="972.7" y="126.3">PENN</text>
<text x="791.3" y="164.7">MISSOURI</text>
<text x="935.8" y="156.8">WEST</text>
<text x="927.4" y="167.2">VIRGINIA</text>
<text x="875.5" y="180.7">KENTUCKY</text>
<text x="947" y="180.7">VIRGINIA</text>
<text x="853.9" y="201.2">TENNESSEE</text>
<text x="954" y="197.5">NORTH</text>
<text x="945" y="207.3">CAROLINA</text>
<text x="791.3" y="215.2">ARKANSAS</text>
<text x="817.4" y="229.2">MISSISSIPPI</text>
<text x="937.2" y="225.6">SOUTH</text>
<text x="928.8" y="236">CAROLINA</text>
<text x="859.5" y="244.4">ALABAMA</text>
<text x="902.7" y="257.8">GEORGIA</text>
<text x="798.9" y="274.1">LOUISIANA</text>
</g>
<g font-family="Liberation Sans" font-size="10" letter-spacing="0.3" fill="#555" stroke="#555" stroke-width="0.05">
<text x="711.6" y="17.3">NORTH</text>
<text x="709.7" y="27.4">DAKOTA</text>
<text x="763.4" y="42.4">MINNESOTA</text>
<text x="711.2" y="65.7">SOUTH</text>
<text x="709.7" y="75.2">DAKOTA</text>
<text x="712.7" y="116.5">NEBRASKA</text>
<text x="794.7" y="109.3">IOWA</text>
<text x="603.4" y="30.4">MONTANA</text>
<text x="555.3" y="85.4">IDAHO</text>
<text x="620.7" y="93.4">WYOMING</text>
<text x="501.8" y="81.2">GON</text>
<text x="502.5" y="29.5">NG</text>
<text x="521" y="142.5">NEVADA</text>
<text x="586.2" y="152.6">UTAH</text>
<text x="641.4" y="159">COLORADO</text>
<text x="730.3" y="161.6">KANSAS</text>
<text x="502.9" y="190.5">FORNIA</text>
<text x="576.3" y="220.8">ARIZONA</text>
<text x="631.6" y="228.4">NEW MEXICO</text>
<text x="733.4" y="201.7">OKLAHOMA</text>
<text x="726.4" y="258.4">TEXAS</text>
<text x="821" y="66.6">WISCONSIN</text>
<text x="880.2" y="81.4">MICHIGAN</text>
<text x="830" y="124.7">ILLINOIS</text>
<text x="918.8" y="130.7">OHIO</text>
<text x="868.3" y="141.8">INDIANA</text>
<text x="978.8" y="95.1">NEW</text>
<text x="972.7" y="126.3">PENN</text>
<text x="791.3" y="164.7">MISSOURI</text>
<text x="935.8" y="156.8">WEST</text>
<text x="927.4" y="167.2">VIRGINIA</text>
<text x="875.5" y="180.7">KENTUCKY</text>
<text x="947" y="180.7">VIRGINIA</text>
<text x="853.9" y="201.2">TENNESSEE</text>
<text x="954" y="197.5">NORTH</text>
<text x="945" y="207.3">CAROLINA</text>
<text x="791.3" y="215.2">ARKANSAS</text>
<text x="817.4" y="229.2">MISSISSIPPI</text>
<text x="937.2" y="225.6">SOUTH</text>
<text x="928.8" y="236">CAROLINA</text>
<text x="859.5" y="244.4">ALABAMA</text>
<text x="902.7" y="257.8">GEORGIA</text>
<text x="798.9" y="274.1">LOUISIANA</text>
</g>
<g font-family="Liberation Sans" font-size="10.8" fill="none" stroke="#fff" stroke-width="2.4" stroke-opacity="0.85" stroke-linejoin="round">
<text x="565.1" y="194.1">Las Vegas</text>
<text x="502.9" y="214.3">os Angeles</text>
<text x="542.7" y="232.6">San Diego</text>
<text x="854.6" y="102.5">Chicago</text>
<text x="950.5" y="74">Toronto</text>
<text x="970" y="46.2">Ottaw</text>
<text x="765.2" y="291.5">Houston</text>
</g>
<g font-family="Liberation Sans" font-size="10.8" fill="#2e2e2e" stroke="#2e2e2e" stroke-width="0.3">
<text x="565.1" y="194.1">Las Vegas</text>
<text x="502.9" y="214.3">os Angeles</text>
<text x="542.7" y="232.6">San Diego</text>
<text x="854.6" y="102.5">Chicago</text>
<text x="950.5" y="74">Toronto</text>
<text x="970" y="46.2">Ottaw</text>
<text x="765.2" y="291.5">Houston</text>
</g>
<text x="674.5" y="143.9" font-family="Liberation Sans" font-weight="bold" font-size="13.3" fill="#222" stroke="#fff" stroke-width="2" paint-order="stroke" stroke-opacity="0.7">United States</text>
<polygon fill="rgba(255,45,30,0.36)" stroke="#ff2a2a" stroke-width="2" stroke-linejoin="round" points="561.0,190.5 675.5,139.5 682.5,229.5 596.0,228.5"/>
<polygon fill="rgba(242,240,70,0.52)" stroke="#f0ea1e" stroke-width="2" stroke-linejoin="round" points="769.6,81.9 810.3,58.6 828.3,106.0 779.3,116.8"/>
<polygon fill="rgba(60,200,40,0.6)" stroke="#44cc2e" stroke-width="2" stroke-linejoin="round" points="795.0,149.0 810.1,175.6 761.0,200.6"/>
<polyline fill="none" stroke="#1a5cf0" stroke-width="3" stroke-linejoin="miter" points="769.7,238.2 883.9,190.5 911.4,224.7 845.4,276.1"/>
<circle cx="560.9" cy="191.3" r="2.6" fill="#fff" stroke="#333" stroke-width="1.2"/>
<circle cx="525.9" cy="220.8" r="2.6" fill="#fff" stroke="#333" stroke-width="1.2"/>
<circle cx="537.6" cy="238.7" r="2.6" fill="#fff" stroke="#333" stroke-width="1.2"/>
<circle cx="873.9" cy="107" r="2.6" fill="#fff" stroke="#333" stroke-width="1.2"/>
<circle cx="968.2" cy="79.2" r="2.6" fill="#fff" stroke="#333" stroke-width="1.2"/>
<circle cx="786.2" cy="277.5" r="2.6" fill="#fff" stroke="#333" stroke-width="1.2"/>
<text x="578" y="272" font-family="Liberation Sans" font-size="10" fill="#4a6fa0" letter-spacing="0.5" transform="rotate(62 578 272)">Gulf of</text>
</svg>
</div>
<!-- map controls -->
<div style="position:absolute;left:512px;top:16px;width:93px;height:34px;background:#fff;border-radius:2px;box-shadow:0 1px 3px rgba(0,0,0,0.3)">
  <span class="a" style="left:9px;top:11px;font-size:11px;font-weight:bold;color:#333;line-height:1">Map</span>
  <div style="position:absolute;left:37px;top:0;width:1px;height:34px;background:#e6e6e6"></div>
  <span class="a" style="left:46px;top:11px;font-size:11px;color:#555;line-height:1">Satellite</span>
</div>
<div style="position:absolute;left:959px;top:189px;width:28px;height:28px;background:#fff;border-radius:2px;box-shadow:0 1px 3px rgba(0,0,0,0.3)">
  <svg width="28" height="28" viewBox="0 0 28 28" style="position:absolute;left:0;top:0"><circle cx="14" cy="6.8" r="3.3" fill="#f5a700" stroke="#d48a00" stroke-width="0.4"/><path d="M10.2 10.5q0-0.8 0.8-0.8h6q0.8 0 0.8 0.8l0.9 7.2h-1.6l-0.6-4v9.6h-2.1v-5h-0.8v5h-2.1v-9.6l-0.6 4h-1.6z" fill="#f5a700" stroke="#d48a00" stroke-width="0.4"/><path d="M12.6 9.8l1.4 2.2l1.4-2.2z" fill="#d4441c"/></svg>
</div>
<div style="position:absolute;left:959px;top:228px;width:28px;height:54px;background:#fff;border-radius:2px;box-shadow:0 1px 3px rgba(0,0,0,0.3)">
  <div style="position:absolute;left:8px;top:12px;width:12px;height:3px;background:#666"></div>
  <div style="position:absolute;left:12.5px;top:7.5px;width:3px;height:12px;background:#666"></div>
  <div style="position:absolute;left:5px;top:27px;width:18px;height:1px;background:#e6e6e6"></div>
  <div style="position:absolute;left:8px;top:39px;width:12px;height:3px;background:#666"></div>
</div>
<div class="a" style="left:508px;top:281px;font-size:20.5px;font-weight:normal;-webkit-text-stroke:0.5px currentColor;line-height:1;letter-spacing:-0.6px;text-shadow:0 0 2px #fff,0 0 2px #fff,0 0 1px #fff"><span style="color:#4285f4">G</span><span style="color:#ea4335">o</span><span style="color:#fbbc05">o</span><span style="color:#4285f4">g</span><span style="color:#34a853">l</span><span style="color:#ea4335">e</span></div>
<div style="position:absolute;left:683px;top:292px;width:314px;height:14px;background:rgba(245,245,245,0.72)">
  <span class="a" style="left:3px;top:2px;font-size:9.6px;color:#444;line-height:1">Map data ©2016 Google, INEGI</span>
  <div style="position:absolute;left:149px;top:0;width:1px;height:14px;background:#c9d6ec"></div>
  <span class="a" style="left:154px;top:2px;font-size:9.6px;color:#444;line-height:1">Terms of Use</span>
  <div style="position:absolute;left:220px;top:0;width:1px;height:14px;background:#c9d6ec"></div>
  <span class="a" style="left:225px;top:2px;font-size:9.6px;color:#444;line-height:1">Report a map error</span>
</div>

<div style="position:absolute;left:502px;top:311px;width:495px;height:31px;background:#fdebb6;border:1px solid #f9d77e"><span class="a" style="left:10px;top:12.5px;font-size:13px;color:#3c3c3c;letter-spacing:0.27px;line-height:1">Shortcode will appear after you save map.</span></div>

<div class="btn" style="left:502px;top:347px;width:233px;height:35px"><svg width="30" height="24" viewBox="562 352 30 24" style="position:absolute;left:59.5px;top:3.5px"><polygon points="571.5,359.25 576,361.0 576,366.0 571.5,364.25" fill="#111" stroke="#111" stroke-width="0.9" stroke-linejoin="round"/><polygon points="576,361.0 580.5,359.25 580.5,364.25 576,366.0" fill="#fff" stroke="#111" stroke-width="0.9" stroke-linejoin="round"/><polygon points="571.5,359.25 576,357.5 580.5,359.25 576,361.0" fill="#fff" stroke="#111" stroke-width="0.9" stroke-linejoin="round"/><polygon points="567.0,364.75 571.5,366.5 571.5,371.5 567.0,369.75" fill="#111" stroke="#111" stroke-width="0.9" stroke-linejoin="round"/><polygon points="571.5,366.5 576.0,364.75 576.0,369.75 571.5,371.5" fill="#fff" stroke="#111" stroke-width="0.9" stroke-linejoin="round"/><polygon points="567.0,364.75 571.5,363 576.0,364.75 571.5,366.5" fill="#fff" stroke="#111" stroke-width="0.9" stroke-linejoin="round"/><polygon points="576.0,364.75 580.5,366.5 580.5,371.5 576.0,369.75" fill="#111" stroke="#111" stroke-width="0.9" stroke-linejoin="round"/><polygon points="580.5,366.5 585.0,364.75 585.0,369.75 580.5,371.5" fill="#fff" stroke="#111" stroke-width="0.9" stroke-linejoin="round"/><polygon points="576.0,364.75 580.5,363 585.0,364.75 580.5,366.5" fill="#fff" stroke="#111" stroke-width="0.9" stroke-linejoin="round"/></svg><span style="left:87px;top:8.8px;font-size:15px">Save Figure</span></div>
<div class="btn" style="left:750px;top:347px;width:247px;height:35px"><svg width="30" height="28" viewBox="810 350 30 28" style="position:absolute;left:58.5px;top:1.5px"><rect x="818.8" y="359" width="12.5" height="1.8" fill="#111"/><path d="M822.8 359v-1q0-1.3 1.3-1.3h2.1q1.3 0 1.3 1.3v1" fill="none" stroke="#111" stroke-width="1.1"/><rect x="819.2" y="361.8" width="11.1" height="11" fill="#111"/><rect x="821.2" y="364" width="1" height="6.8" fill="#fff"/><rect x="824.3" y="364" width="1" height="6.8" fill="#fff"/><rect x="827.4" y="364" width="1" height="6.8" fill="#fff"/></svg><span style="left:88px;top:8.8px;font-size:15px">Delete Figure</span></div>
<div style="position:absolute;left:502px;top:397px;width:495px;height:1px;background:#eee"></div>

<!-- table -->
<div class="a" style="left:584px;top:431px;font-size:14px;font-weight:bold;color:#444;letter-spacing:1.3px;line-height:1">Title</div>
<div class="a" style="left:750px;top:431px;font-size:14px;font-weight:bold;color:#444;letter-spacing:1.8px;line-height:1">Type</div>
<div class="a" style="left:880px;top:431px;font-size:14px;font-weight:bold;color:#444;letter-spacing:1.1px;line-height:1">Actions</div>
<div class="a" style="left:563px;top:481px;font-size:13px;color:#555;letter-spacing:1.15px;line-height:1">My figure 4</div>
<div class="a" style="left:744px;top:481px;font-size:13px;color:#555;letter-spacing:0.8px;line-height:1">polygon</div>
<div style="position:absolute;left:874px;top:475px;width:32px;height:24px;border:1.3px solid #222;background:#fff"><svg width="32" height="24" viewBox="0 0 32 24" style="position:absolute;left:-1.3px;top:-1.3px"><polygon points="11.6,16.2 14.41,15.63 21.31,9.66 19.49,7.54 12.59,13.51" fill="#2a2a2a"/><polygon points="11.6,16.2 13.2,15.9 12.1,14.6" fill="#999"/><line x1="14.5" y1="12.2" x2="20.3" y2="7.2" stroke="#fff" stroke-width="0.35" opacity="0.5"/></svg></div>
<div style="position:absolute;left:911px;top:475px;width:32px;height:24px;border:1.3px solid #222;background:#fff"><svg width="32" height="24" viewBox="0 0 32 24" style="position:absolute;left:-1.3px;top:-1.3px"><g fill="none" stroke="#7a7a7a" stroke-width="0.9"><path d="M12.1 9.5h8.8M14.8 9.3v-1.2q0-0.8 0.8-0.8h1.8q0.8 0 0.8 0.8v1.2M13 9.8l0.3 6.8h6.2l0.3-6.8"/><path d="M15 11.2v4M16.4 11.2v4M17.8 11.2v4" stroke-width="0.8" stroke="#999"/></g></svg></div>
<div class="a" style="left:563px;top:531px;font-size:13px;color:#555;letter-spacing:1.15px;line-height:1">My figure 3</div>
<div class="a" style="left:744px;top:531px;font-size:13px;color:#555;letter-spacing:0.8px;line-height:1">polygon</div>
<div style="position:absolute;left:874px;top:525px;width:32px;height:24px;border:1.3px solid #222;background:#fff"><svg width="32" height="24" viewBox="0 0 32 24" style="position:absolute;left:-1.3px;top:-1.3px"><polygon points="11.6,16.2 14.41,15.63 21.31,9.66 19.49,7.54 12.59,13.51" fill="#2a2a2a"/><polygon points="11.6,16.2 13.2,15.9 12.1,14.6" fill="#999"/><line x1="14.5" y1="12.2" x2="20.3" y2="7.2" stroke="#fff" stroke-width="0.35" opacity="0.5"/></svg></div>
<div style="position:absolute;left:911px;top:525px;width:32px;height:24px;border:1.3px solid #222;background:#fff"><svg width="32" height="24" viewBox="0 0 32 24" style="position:absolute;left:-1.3px;top:-1.3px"><g fill="none" stroke="#7a7a7a" stroke-width="0.9"><path d="M12.1 9.5h8.8M14.8 9.3v-1.2q0-0.8 0.8-0.8h1.8q0.8 0 0.8 0.8v1.2M13 9.8l0.3 6.8h6.2l0.3-6.8"/><path d="M15 11.2v4M16.4 11.2v4M17.8 11.2v4" stroke-width="0.8" stroke="#999"/></g></svg></div>
<div class="a" style="left:563px;top:581px;font-size:13px;color:#555;letter-spacing:1.15px;line-height:1">My figure 2</div>
<div class="a" style="left:744px;top:581px;font-size:13px;color:#555;letter-spacing:0.8px;line-height:1">polygon</div>
<div style="position:absolute;left:874px;top:575px;width:32px;height:24px;border:1.3px solid #222;background:#fff"><svg width="32" height="24" viewBox="0 0 32 24" style="position:absolute;left:-1.3px;top:-1.3px"><polygon points="11.6,16.2 14.41,15.63 21.31,9.66 19.49,7.54 12.59,13.51" fill="#2a2a2a"/><polygon points="11.6,16.2 13.2,15.9 12.1,14.6" fill="#999"/><line x1="14.5" y1="12.2" x2="20.3" y2="7.2" stroke="#fff" stroke-width="0.35" opacity="0.5"/></svg></div>
<div style="position:absolute;left:911px;top:575px;width:32px;height:24px;border:1.3px solid #222;background:#fff"><svg width="32" height="24" viewBox="0 0 32 24" style="position:absolute;left:-1.3px;top:-1.3px"><g fill="none" stroke="#7a7a7a" stroke-width="0.9"><path d="M12.1 9.5h8.8M14.8 9.3v-1.2q0-0.8 0.8-0.8h1.8q0.8 0 0.8 0.8v1.2M13 9.8l0.3 6.8h6.2l0.3-6.8"/><path d="M15 11.2v4M16.4 11.2v4M17.8 11.2v4" stroke-width="0.8" stroke="#999"/></g></svg></div>

</body></html>
